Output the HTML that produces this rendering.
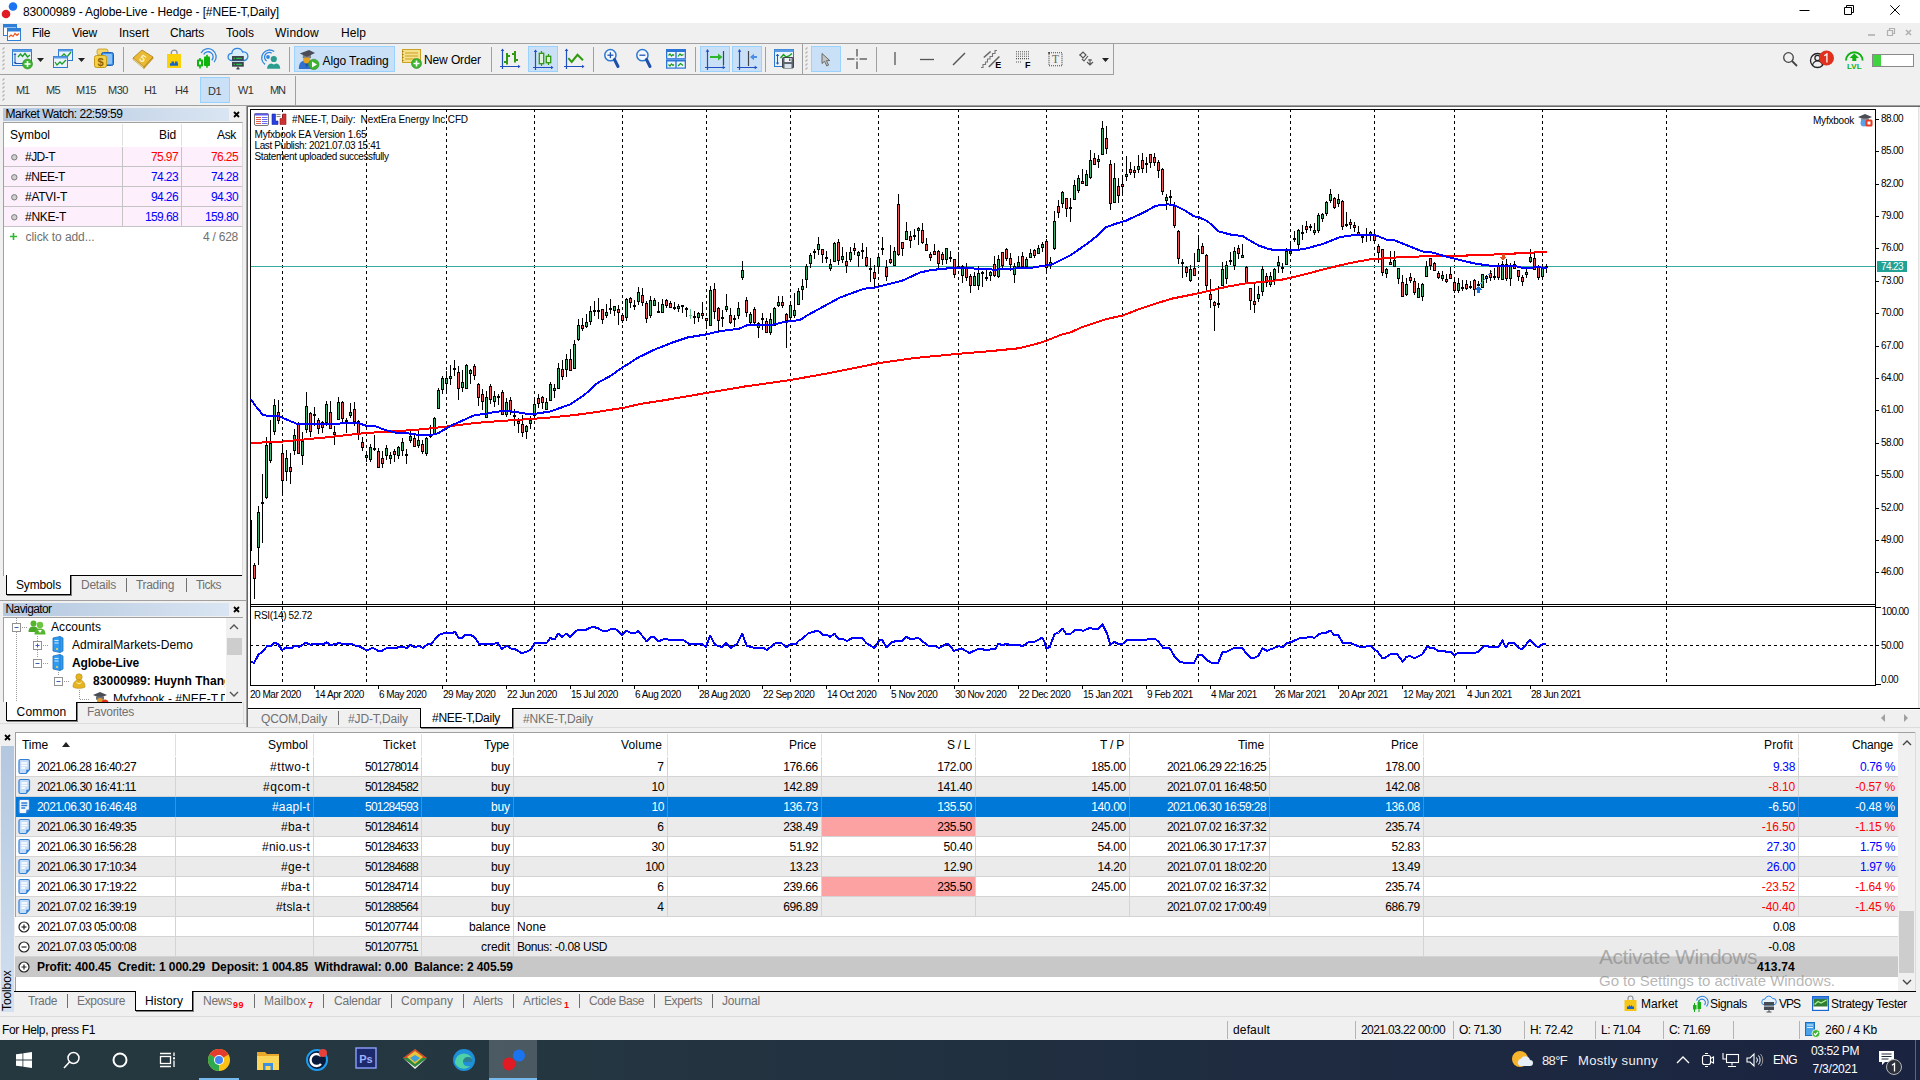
<!DOCTYPE html>
<html><head><meta charset="utf-8"><title>MetaTrader 5</title>
<style>
html,body{margin:0;padding:0;}
body{width:1920px;height:1080px;overflow:hidden;background:#f0f0f0;font-family:"Liberation Sans",sans-serif;position:relative;}
#r{position:absolute;left:0;top:0;width:1920px;height:1080px;overflow:hidden;}
#r div{position:absolute;box-sizing:border-box;}
#r svg{position:absolute;overflow:visible;}
.t{white-space:pre;}
</style></head><body><div id="r">
<div style="left:0px;top:0px;width:1920px;height:23px;background:#ffffff;"></div>
<svg style="left:0;top:0" width="24" height="23"><circle cx="6" cy="14" r="4.3" fill="#e01b24"/><circle cx="13" cy="6.5" r="4.3" fill="#1a73f0"/></svg>
<div class="t" style="left:23.00px;top:3.50px;height:16px;line-height:16px;font-size:12px;color:#000;letter-spacing:-0.116px;">83000989 - Aglobe-Live - Hedge - [#NEE-T,Daily]</div>
<svg style="left:1780px;top:0" width="140" height="23" fill="none" stroke="#000" stroke-width="1"><path d="M19.500 10.500h10"/><path d="M64.500 7.500h7v7h-7z M66.500 7.500v-2h7v7h-2"/><path d="M110.300 5.300l9.400 9.400M119.700 5.300l-9.400 9.400" stroke-width="1"/></svg>
<div style="left:0px;top:23px;width:1920px;height:21px;background:#f0f0f0;"></div>
<div style="left:0px;top:43px;width:1920px;height:1px;background:#a0a0a0;"></div>
<svg style="left:3px;top:24px" width="19" height="18"><rect x="0.5" y="0.5" width="13" height="11" fill="#fff" stroke="#2f7fd6"/><rect x="0.5" y="0.5" width="13" height="3" fill="#2f7fd6"/><rect x="4.5" y="4.5" width="13" height="12" fill="#fff" stroke="#2f7fd6"/><rect x="4.5" y="4.5" width="13" height="3" fill="#2f7fd6"/><path d="M6 13l2-2 2 1.5 2-3 2 2 2-2" stroke="#e8541a" fill="none" stroke-width="1.2"/></svg>
<div class="t" style="left:32.00px;top:25.00px;height:16px;line-height:16px;font-size:12px;color:#000;letter-spacing:-0.334px;">File</div>
<div class="t" style="left:72.00px;top:25.00px;height:16px;line-height:16px;font-size:12px;color:#000;letter-spacing:-0.198px;">View</div>
<div class="t" style="left:119.00px;top:25.00px;height:16px;line-height:16px;font-size:12px;color:#000;letter-spacing:-0.002px;">Insert</div>
<div class="t" style="left:170.00px;top:25.00px;height:16px;line-height:16px;font-size:12px;color:#000;letter-spacing:-0.224px;">Charts</div>
<div class="t" style="left:226.00px;top:25.00px;height:16px;line-height:16px;font-size:12px;color:#000;letter-spacing:-0.003px;">Tools</div>
<div class="t" style="left:275.00px;top:25.00px;height:16px;line-height:16px;font-size:12px;color:#000;letter-spacing:0.220px;">Window</div>
<div class="t" style="left:341.00px;top:25.00px;height:16px;line-height:16px;font-size:12px;color:#000;letter-spacing:0.080px;">Help</div>
<svg style="left:1860px;top:24px" width="60" height="18" fill="none" stroke="#b0b0b0" stroke-width="1.6"><path d="M8 11h7"/><path d="M27.5 6.5h5v5h-5z M29.5 6.5v-2h5v5h-2" stroke-width="1.2"/><path d="M46 6l5 5M51 6l-5 5"/></svg>
<div style="left:0px;top:74px;width:1114px;height:1px;background:#a0a0a0;"></div>
<div style="left:0px;top:105px;width:1920px;height:1px;background:#a0a0a0;"></div>
<svg style="left:2px;top:47px" width="4" height="25" viewBox="0 0 4 25" ><path d="M0.500 2.5l2-2" stroke="#b4b4b4" stroke-width="1.200"/><path d="M0.500 6.5l2-2" stroke="#b4b4b4" stroke-width="1.200"/><path d="M0.500 10.5l2-2" stroke="#b4b4b4" stroke-width="1.200"/><path d="M0.500 14.5l2-2" stroke="#b4b4b4" stroke-width="1.200"/><path d="M0.500 18.5l2-2" stroke="#b4b4b4" stroke-width="1.200"/><path d="M0.500 22.5l2-2" stroke="#b4b4b4" stroke-width="1.200"/></svg>
<svg style="left:2px;top:78px" width="4" height="25" viewBox="0 0 4 25" ><path d="M0.500 2.5l2-2" stroke="#b4b4b4" stroke-width="1.200"/><path d="M0.500 6.5l2-2" stroke="#b4b4b4" stroke-width="1.200"/><path d="M0.500 10.5l2-2" stroke="#b4b4b4" stroke-width="1.200"/><path d="M0.500 14.5l2-2" stroke="#b4b4b4" stroke-width="1.200"/><path d="M0.500 18.5l2-2" stroke="#b4b4b4" stroke-width="1.200"/><path d="M0.500 22.5l2-2" stroke="#b4b4b4" stroke-width="1.200"/></svg>
<svg style="left:805px;top:47px" width="4" height="25" viewBox="0 0 4 25" ><path d="M0.500 2.5l2-2" stroke="#b4b4b4" stroke-width="1.200"/><path d="M0.500 6.5l2-2" stroke="#b4b4b4" stroke-width="1.200"/><path d="M0.500 10.5l2-2" stroke="#b4b4b4" stroke-width="1.200"/><path d="M0.500 14.5l2-2" stroke="#b4b4b4" stroke-width="1.200"/><path d="M0.500 18.5l2-2" stroke="#b4b4b4" stroke-width="1.200"/><path d="M0.500 22.5l2-2" stroke="#b4b4b4" stroke-width="1.200"/></svg>
<div style="left:123px;top:47px;width:1px;height:25px;background:#a0a0a0;"></div>
<div style="left:289px;top:47px;width:1px;height:25px;background:#a0a0a0;"></div>
<div style="left:491px;top:47px;width:1px;height:25px;background:#a0a0a0;"></div>
<div style="left:593px;top:47px;width:1px;height:25px;background:#a0a0a0;"></div>
<div style="left:695px;top:47px;width:1px;height:25px;background:#a0a0a0;"></div>
<div style="left:765px;top:47px;width:1px;height:25px;background:#a0a0a0;"></div>
<div style="left:802px;top:44px;width:1px;height:30px;background:#a0a0a0;"></div>
<div style="left:876px;top:47px;width:1px;height:25px;background:#a0a0a0;"></div>
<div style="left:1113px;top:44px;width:1px;height:31px;background:#a0a0a0;"></div>
<div style="left:295px;top:76px;width:1px;height:29px;background:#a0a0a0;"></div>
<div style="left:294px;top:46px;width:101px;height:26px;background:#c9e0f7;border:1px solid #99d1ff"></div>
<div style="left:528px;top:46px;width:30px;height:26px;background:#c9e0f7;border:1px solid #99d1ff"></div>
<div style="left:700px;top:46px;width:30px;height:26px;background:#c9e0f7;border:1px solid #99d1ff"></div>
<div style="left:732px;top:46px;width:30px;height:26px;background:#c9e0f7;border:1px solid #99d1ff"></div>
<div style="left:811px;top:46px;width:30px;height:26px;background:#c9e0f7;border:1px solid #99d1ff"></div>
<div style="left:200px;top:77px;width:30px;height:26px;background:#c9e0f7;border:1px solid #99d1ff"></div>
<div class="t" style="left:322.50px;top:52.50px;height:16px;line-height:16px;font-size:12px;color:#000;letter-spacing:-0.115px;">Algo Trading</div>
<div class="t" style="left:424.00px;top:51.50px;height:16px;line-height:16px;font-size:12px;color:#000;letter-spacing:-0.113px;">New Order</div>
<div class="t" style="left:16.00px;top:82.00px;height:16px;line-height:16px;font-size:11px;color:#333;letter-spacing:-1.141px;">M1</div>
<div class="t" style="left:46.00px;top:82.00px;height:16px;line-height:16px;font-size:11px;color:#333;letter-spacing:-0.641px;">M5</div>
<div class="t" style="left:76.00px;top:82.00px;height:16px;line-height:16px;font-size:11px;color:#333;letter-spacing:-0.466px;">M15</div>
<div class="t" style="left:108.00px;top:82.00px;height:16px;line-height:16px;font-size:11px;color:#333;letter-spacing:-0.466px;">M30</div>
<div class="t" style="left:144.00px;top:82.00px;height:16px;line-height:16px;font-size:11px;color:#333;letter-spacing:-1.030px;">H1</div>
<div class="t" style="left:175.00px;top:82.00px;height:16px;line-height:16px;font-size:11px;color:#333;letter-spacing:-0.530px;">H4</div>
<div class="t" style="left:208.00px;top:82.50px;height:16px;line-height:16px;font-size:11px;color:#333;letter-spacing:-0.530px;">D1</div>
<div class="t" style="left:238.00px;top:82.00px;height:16px;line-height:16px;font-size:11px;color:#333;letter-spacing:-0.750px;">W1</div>
<div class="t" style="left:270.00px;top:82.00px;height:16px;line-height:16px;font-size:11px;color:#333;letter-spacing:-1.054px;">MN</div>
<svg style="left:12px;top:48px" width="22" height="22" viewBox="0 0 22 22" ><rect x="0.5" y="1.5" width="19" height="16" fill="#e8f1fb" stroke="#2f78d0"/><rect x="0.5" y="1.5" width="19" height="2.5" fill="#5a9be6"/><path d="M3 6v9M2 7l1-1.5 1 1.5M2 14l1 1.5 1-1.5M3 15.5h15" stroke="#2456b5" fill="none" stroke-width="1"/><path d="M6 9l2.5-3 2 2.5 2.5-3 2.5 3.5 2.5-2" stroke="#1e9e28" fill="none" stroke-width="1.4"/><circle cx="15.5" cy="16" r="5" fill="#3cb531" stroke="#2a8a22" stroke-width=".6"/><path d="M15.5 13v6M12.5 16h6" stroke="#fff" stroke-width="1.6"/></svg>
<svg style="left:37px;top:58px" width="8" height="5" viewBox="0 0 8 5" ><path d="M0 0h7l-3.5 4z" fill="#222"/></svg>
<svg style="left:53px;top:48px" width="22" height="22" viewBox="0 0 22 22" ><rect x="5.5" y="1.5" width="14" height="11" fill="#eaf2fb" stroke="#2f78d0"/><rect x="5.5" y="1.5" width="14" height="2" fill="#5a9be6"/><path d="M8 9l3-3 3 3 4-5" stroke="#1e9e28" fill="none" stroke-width="1.3"/><rect x="0.5" y="8.5" width="14" height="11" fill="#eaf2fb" stroke="#2f78d0"/><rect x="0.5" y="8.5" width="14" height="2" fill="#5a9be6"/><path d="M2 14l2 3 3-3 2 2 4-4" stroke="#1e9e28" fill="none" stroke-width="1.3"/></svg>
<svg style="left:78px;top:58px" width="8" height="5" viewBox="0 0 8 5" ><path d="M0 0h7l-3.5 4z" fill="#222"/></svg>
<svg style="left:94px;top:48px" width="22" height="22" viewBox="0 0 22 22" ><rect x="3" y="1" width="11" height="6" rx="2" fill="#f3d46a" stroke="#c49a18" stroke-width=".8"/><rect x="7.5" y="4.5" width="12" height="13" rx="2" fill="#3d8fe8" stroke="#1d5fb8"/><rect x="9" y="6" width="9" height="10" rx="1" fill="#8cc3f7"/><rect x="0.5" y="7.5" width="12" height="12" rx="2" fill="#f5cf45" stroke="#c49a18"/><text x="6.5" y="17.5" font-size="11" text-anchor="middle" fill="#8a6508" font-family="Liberation Sans" font-weight="bold">$</text></svg>
<svg style="left:132px;top:48px" width="22" height="22" viewBox="0 0 22 22" ><path d="M1 10l9-8 11 7-9 10z" fill="#e9b934" stroke="#a87c12" stroke-width=".8"/><path d="M1 10l11 9v1.5l-11-9z" fill="#fbe9a6" stroke="#a87c12" stroke-width=".5"/><path d="M12 19l9-10v1.5l-9 10z" fill="#d9a520" stroke="#a87c12" stroke-width=".5"/><text x="11" y="14" font-size="10" font-weight="bold" text-anchor="middle" fill="#fff3c0" transform="rotate(35 11 10)" font-family="Liberation Sans">5</text></svg>
<svg style="left:166px;top:48px" width="16" height="22" viewBox="0 0 16 22" ><path d="M5.300 6.500V5a2.900 2.900 0 0 1 5.800 0v1.500" fill="none" stroke="#8a8f98" stroke-width="1.300"/><rect x="1" y="6" width="14" height="14" fill="#fbd10a"/><path d="M4 17.800v-2.500h1.500v-1.800h2.500v1.800h1v-1.800h2.500v1.800h0.500v2.500z" fill="#1565c0"/></svg>
<svg style="left:196px;top:48px" width="22" height="22" viewBox="0 0 22 22" ><path d="M5.100 5a8 8 0 1 1 13 9.100" fill="none" stroke="#2f86e0" stroke-width="1.300"/><path d="M7.700 6.500a5 5 0 1 1 8.100 5.700" fill="none" stroke="#2f86e0" stroke-width="1.300"/><path d="M4 10v10.600M11 6.800v13" stroke="#0cb40c" stroke-width="1.600"/><rect x="1" y="11.400" width="6" height="7.100" rx="0.800" fill="#0cb40c"/><rect x="3" y="13.500" width="2" height="3" fill="#fff"/><rect x="8" y="8.500" width="6" height="9.500" rx="0.800" fill="#0cb40c"/></svg>
<svg style="left:227px;top:48px" width="22" height="22" viewBox="0 0 22 22" ><path d="M4.500 12.500a3.600 3.600 0 0 1 0.300-7.200a5.600 5.600 0 0 1 10.800-1.300a4.300 4.300 0 0 1 1.900 8.500z" fill="#d9eefb" stroke="#2f86e0" stroke-width="1.300"/><rect x="5" y="8" width="11.800" height="4.700" fill="#3f454f"/><rect x="5" y="14" width="11.800" height="4.700" fill="#3f454f"/><path d="M6.700 10.400h1.200M9.300 10.400h5.500M6.700 16.400h1.200M9.300 16.400h5.500" stroke="#27c24a" stroke-width="1.200"/><path d="M11 18.700v2M9.500 20.700h3" stroke="#3f454f" stroke-width="1.400"/></svg>
<svg style="left:259px;top:48px" width="22" height="22" viewBox="0 0 22 22" ><circle cx="9" cy="9" r="1.900" fill="#2f86e0"/><path d="M12.700 5.200a4.400 4.400 0 1 0 -5 7.800" fill="none" stroke="#2f86e0" stroke-width="1.300"/><path d="M15.200 3.500a7.600 7.600 0 1 0 -9.200 12.900" fill="none" stroke="#2f86e0" stroke-width="1.300"/><circle cx="14.800" cy="11" r="3.100" fill="#2a9d8f"/><path d="M8 20.800c0.300-3.500 1.800-4.800 4.300-5.300l2.500 1 2.500-1c2.500 0.500 3.700 1.800 4 5.300z" fill="#2a9d8f"/></svg>
<svg style="left:298px;top:48px" width="22" height="22" viewBox="0 0 22 22" ><path d="M0.800 21c0-6 2.700-8.700 7.600-8.700s6.500 2.700 7 8.700z" fill="#2f6fd0"/><path d="M6 13l3 7 1.500-7z" fill="#1d4fa8"/><circle cx="8.700" cy="11.800" r="3.600" fill="#e3a21f"/><path d="M4.800 7v3.300c2.200-1.200 6-1.200 8.200 0v-3.300z" fill="#7a7e87"/><path d="M1.800 5.500l9.200-3.500 6 3-8 3.700z" fill="#4a4d55"/><circle cx="15.800" cy="16.400" r="5.200" fill="#3db32f" stroke="#2a8a22" stroke-width=".6"/><path d="M14 13.400v6l5-3z" fill="#fff"/></svg>
<svg style="left:401px;top:48px" width="22" height="22" viewBox="0 0 22 22" ><rect x="1.500" y="1.500" width="18" height="13" fill="#f7e08a" stroke="#c9a227"/><path d="M4 5h13M4 8h13M4 11h10" stroke="#c9a227" stroke-width="1"/><path d="M1 3.500h1.500M1 6.500h1.500M1 9.500h1.500M1 12.500h1.500" stroke="#9a7a10"/><circle cx="15.500" cy="15.500" r="5" fill="#3cb531" stroke="#2a8a22" stroke-width=".6"/><path d="M15.500 12.500v6M12.500 15.500h6" stroke="#fff" stroke-width="1.600"/></svg>
<svg style="left:500px;top:48px" width="22" height="22" viewBox="0 0 22 22" ><path d="M2.500 2v19M0 18.500h19" stroke="#1f4fc0" fill="none" stroke-width="1.200"/><path d="M2.500 0.500l1.800 2.500h-3.600zM20.500 18.500l-2.500 1.800v-3.600z" fill="#1f4fc0"/><path d="M7 5v11.500M7 14h-3M7 8h3M15 3v11.500M15 6h-3M15 12h3" stroke="#2f9a10" stroke-width="2" fill="none"/></svg>
<svg style="left:533px;top:49px" width="22" height="22" viewBox="0 0 22 22" ><path d="M2.500 2v19M0 18.500h19" stroke="#1f4fc0" fill="none" stroke-width="1.200"/><path d="M2.500 0.500l1.800 2.500h-3.600zM20.500 18.500l-2.500 1.800v-3.600z" fill="#1f4fc0"/><path d="M8.500 2v15M15.500 5v11" stroke="#2f9a10" stroke-width="1.200"/><rect x="6.300" y="4.300" width="4.400" height="10.400" fill="#e2f3dc" stroke="#2f9a10" stroke-width="1.300"/><rect x="13.300" y="7.300" width="4.400" height="6.400" fill="#e2f3dc" stroke="#2f9a10" stroke-width="1.300"/></svg>
<svg style="left:564px;top:48px" width="22" height="22" viewBox="0 0 22 22" ><path d="M2.500 2v19M0 18.500h19" stroke="#1f4fc0" fill="none" stroke-width="1.200"/><path d="M2.500 0.500l1.800 2.500h-3.600zM20.500 18.500l-2.500 1.800v-3.600z" fill="#1f4fc0"/><path d="M4.300 10.200l3.400 3.800 5.800-7.200 5.500 5.500" stroke="#2f9a10" stroke-width="2" fill="none"/></svg>
<svg style="left:603px;top:48px" width="20" height="22" viewBox="0 0 20 22" ><circle cx="7.400" cy="7.200" r="5.600" fill="#f2f8fe" stroke="#2f78d0" stroke-width="1.500"/><path d="M11.500 11.500l3.500 7" stroke="#1f4fa8" stroke-width="3" stroke-linecap="round"/><path d="M4.400 7.200h6" stroke="#2456b5" stroke-width="1.300"/><path d="M7.400 4.200v6" stroke="#2456b5" stroke-width="1.300"/></svg>
<svg style="left:635px;top:48px" width="20" height="22" viewBox="0 0 20 22" ><circle cx="7.400" cy="7.200" r="5.600" fill="#f2f8fe" stroke="#2f78d0" stroke-width="1.500"/><path d="M11.500 11.500l3.500 7" stroke="#1f4fa8" stroke-width="3" stroke-linecap="round"/><path d="M4.400 7.200h6" stroke="#2456b5" stroke-width="1.300"/></svg>
<svg style="left:666px;top:49px" width="21" height="20" viewBox="0 0 21 20" ><rect x="0" y="0" width="20" height="19.700" fill="#2b74d8"/><g fill="#eef5fd"><rect x="1.300" y="3" width="8" height="6"/><rect x="10.700" y="3" width="8" height="6"/><rect x="1.300" y="12.500" width="8" height="6"/><rect x="10.700" y="12.500" width="8" height="6"/></g><rect x="0" y="9.600" width="20" height="1" fill="#7fb0ee"/><path d="M2.500 6.500l1.500-1.500 1.500 2 1.500-1.500 1 1M12 7.500l2-2.500 1.500 1.500 2-1M2.500 15.500l1.500 1.500 1.500-2 1.500 1.500 1-1M12 17l2.500-2.500 2.500 2" stroke="#1a9a1a" fill="none" stroke-width="1.200"/></svg>
<svg style="left:705px;top:48px" width="22" height="23" viewBox="0 0 22 23" ><path d="M2.500 3v19M0 19.500h19" stroke="#1f4fc0" fill="none" stroke-width="1.200"/><path d="M2.500 1l1.800 2.800h-3.600zM20.500 19.500l-2.800 1.800v-3.600z" fill="#1f4fc0"/><path d="M18.500 3v14.500" stroke="#444" stroke-width="1.200"/><path d="M5 8h8v-2.500l4.500 3.500-4.500 3.500v-2.500h-8z" fill="#2fb52f"/></svg>
<svg style="left:737px;top:48px" width="22" height="23" viewBox="0 0 22 23" ><path d="M2.500 3v19M0 19.500h19" stroke="#1f4fc0" fill="none" stroke-width="1.200"/><path d="M2.500 1l1.800 2.800h-3.600zM20.500 19.500l-2.800 1.800v-3.600z" fill="#1f4fc0"/><path d="M11.500 3v15" stroke="#444" stroke-width="1.200"/><path d="M20 8h-3v-2.300l-4 3.300 4 3.300v-2.300h3z" fill="#4a8ee8"/></svg>
<svg style="left:774px;top:49px" width="22" height="20" viewBox="0 0 22 20" ><rect x="0.500" y="0.500" width="19" height="17" fill="#eaf2fb" stroke="#2f78d0"/><rect x="0.500" y="0.500" width="19" height="2.500" fill="#5a9be6"/><path d="M3.500 5.500v9.500M2.300 7l1.200-1.800 1.200 1.800M2.300 13.500l1.200 1.800 1.200-1.800" stroke="#2456b5" fill="none"/><path d="M6.500 9l3-3.500 2.500 2.500 3-1 3-2.500" stroke="#16a016" fill="none" stroke-width="1.400"/><rect x="8.500" y="8.500" width="11" height="10.500" rx="1" fill="#5f6670" stroke="#3f444c"/><rect x="10.500" y="9" width="7" height="4" fill="#eef4fa"/><rect x="15" y="9.500" width="1.500" height="2.500" fill="#5f6670"/><rect x="10.500" y="15" width="7" height="4" fill="#d8e2ec"/></svg>
<svg style="left:820px;top:52px" width="14" height="16" viewBox="0 0 14 16" ><path d="M2 1.500v10l2.600-2.200 2.200 4.700 1.800-0.900-2.200-4.500h3.400z" fill="#c4c4c4" stroke="#6a6a6a" stroke-width="1"/></svg>
<svg style="left:846px;top:48px" width="22" height="22" viewBox="0 0 22 22" ><path d="M11 1v7.500M11 13.500v7.500M1 11h7.500M13.500 11h7.500" stroke="#666" stroke-width="1.500"/><rect x="10.300" y="10.300" width="1.400" height="1.400" fill="#666"/></svg>
<svg style="left:893px;top:52px" width="4" height="14" viewBox="0 0 4 14" ><path d="M2 0v13" stroke="#555" stroke-width="1.300"/></svg>
<svg style="left:920px;top:58px" width="15" height="3" viewBox="0 0 15 3" ><path d="M0 1.500h14" stroke="#555" stroke-width="1.300"/></svg>
<svg style="left:952px;top:52px" width="15" height="15" viewBox="0 0 15 15" ><path d="M1 13L13 1" stroke="#555" stroke-width="1.400"/></svg>
<svg style="left:980px;top:49px" width="24" height="22" viewBox="0 0 24 22" ><path d="M1 18.500h2v-3h2.500v-2.500h2v-3h2.500v-2.500h2.500v-3h2.500v-3h2" stroke="#777" fill="none" stroke-width="1.100"/><path d="M3.800 8.500L10.600 2.500M8.800 18L19.400 7.500" stroke="#666" stroke-width="1.600"/><text x="15.300" y="18.800" font-size="9" font-weight="bold" font-family="Liberation Sans" fill="#000">E</text></svg>
<svg style="left:1015px;top:50px" width="20" height="20" viewBox="0 0 20 20" ><path d="M1 1.700h13M1 4h13M1 6.300h13M1 8.600h13M1 12h6" stroke="#555" stroke-width="1.100" stroke-dasharray="1 1"/><text x="10" y="17.800" font-size="9" font-weight="bold" font-family="Liberation Sans" fill="#000">F</text></svg>
<svg style="left:1047px;top:50px" width="18" height="18" viewBox="0 0 18 18" ><rect x="2" y="2.700" width="13" height="13" fill="none" stroke="#444" stroke-width="1.100" stroke-dasharray="1 1"/><rect x="1.200" y="2" width="1.800" height="1.800" fill="#444"/><text x="8.500" y="13.300" font-size="11.500" text-anchor="middle" font-family="Liberation Serif" fill="#666">T</text></svg>
<svg style="left:1078px;top:50px" width="20" height="18" viewBox="0 0 20 18" ><path d="M2 5l3-3 3 3-3 3zM1 5h2M9 12l3 3 3-3M12 9v6M10 10h4" stroke="#555" fill="none" stroke-width="1.100"/><path d="M4 9l2 2 4-5" stroke="#555" fill="none" stroke-width="1.100"/></svg>
<svg style="left:1102px;top:58px" width="8" height="5" viewBox="0 0 8 5" ><path d="M0 0h7l-3.5 4z" fill="#222"/></svg>
<svg style="left:1782px;top:51px" width="18" height="18" viewBox="0 0 18 18" ><circle cx="6.500" cy="6.500" r="4.800" fill="none" stroke="#444" stroke-width="1.300"/><path d="M10 10l5 5" stroke="#444" stroke-width="1.800"/></svg>
<svg style="left:1809px;top:50px" width="30" height="20" viewBox="0 0 30 20" ><circle cx="8.500" cy="10.500" r="7" fill="none" stroke="#222" stroke-width="1.300"/><circle cx="8.500" cy="8" r="2.600" fill="none" stroke="#222" stroke-width="1.200"/><path d="M3.500 15c1-3 3-4 5-4s4 1 5 4" fill="none" stroke="#222" stroke-width="1.200"/><circle cx="17.500" cy="8" r="7.500" fill="#e0301e"/><path d="M15.300 5.800l2.600-1.800v8.500" fill="none" stroke="#fff" stroke-width="1.300"/></svg>
<svg style="left:1843px;top:49px" width="22" height="22" viewBox="0 0 22 22" ><path d="M3 11.500a8.300 8.300 0 0 1 16.600 0" fill="none" stroke="#12b012" stroke-width="2"/><path d="M11.300 4.500l4.700 4.500h-2.700v3h-4v-3h-2.700z" fill="#12b012"/><text x="11.300" y="20" font-size="8" font-weight="bold" text-anchor="middle" fill="#12b012" font-family="Liberation Sans">LVL</text></svg>
<div style="left:1872px;top:54px;width:42px;height:13px;background:#fff;border:1px solid #8a8a8a"></div>
<div style="left:1873px;top:55px;width:8px;height:11px;background:#3fd33f;"></div>
<div style="left:3px;top:108px;width:226px;height:13px;background:linear-gradient(to right,#b3c7df,#d9e5f2);"></div>
<div class="t" style="left:5.50px;top:106.00px;height:16px;line-height:16px;font-size:12px;color:#000;letter-spacing:-0.452px;">Market Watch: 22:59:59</div>
<svg style="left:233.0px;top:111.0px" width="7.0" height="7.0" viewBox="0 0 7.0 7.0" ><path d="M1 1l5.0 5.0M6.0 1l-5.0 5.0" stroke="#000" stroke-width="1.8"/></svg>
<div style="left:3px;top:122px;width:240px;height:454px;background:#fff;border-top:1px solid #a0a0a0;border-left:1px solid #a0a0a0;border-right:1px solid #dcdcdc"></div>
<div class="t" style="left:10.00px;top:127.00px;height:16px;line-height:16px;font-size:12px;color:#000;letter-spacing:-0.002px;">Symbol</div>
<div class="t" style="left:159.00px;top:127.00px;height:16px;line-height:16px;font-size:12px;color:#000;letter-spacing:-0.115px;">Bid</div>
<div class="t" style="left:217.00px;top:127.00px;height:16px;line-height:16px;font-size:12px;color:#000;letter-spacing:-0.335px;">Ask</div>
<div style="left:122px;top:124px;width:1px;height:22px;background:#e0e0e0;"></div>
<div style="left:181px;top:124px;width:1px;height:22px;background:#e0e0e0;"></div>
<div style="left:4px;top:147px;width:238px;height:19px;background:#fdf0fc;"></div>
<div style="left:4px;top:166px;width:238px;height:1px;background:#c4c4c4;"></div>
<div style="left:122px;top:147px;width:1px;height:20px;background:#c4c4c4;"></div>
<div style="left:181px;top:147px;width:1px;height:20px;background:#c4c4c4;"></div>
<svg style="left:10px;top:153px" width="9" height="9" viewBox="0 0 9 9" ><circle cx="4.300" cy="4.300" r="2.700" fill="#d0d0d0" stroke="#7a7a7a" stroke-width="1"/></svg>
<div class="t" style="left:25.00px;top:148.50px;height:16px;line-height:16px;font-size:12px;color:#000;letter-spacing:-0.533px;">#JD-T</div>
<div class="t" style="left:151.00px;top:148.50px;height:16px;line-height:16px;font-size:12px;color:#ff0000;letter-spacing:-0.606px;">75.97</div>
<div class="t" style="left:211.00px;top:148.50px;height:16px;line-height:16px;font-size:12px;color:#ff0000;letter-spacing:-0.606px;">76.25</div>
<div style="left:4px;top:167px;width:238px;height:19px;background:#fdf0fc;"></div>
<div style="left:4px;top:186px;width:238px;height:1px;background:#c4c4c4;"></div>
<div style="left:122px;top:167px;width:1px;height:20px;background:#c4c4c4;"></div>
<div style="left:181px;top:167px;width:1px;height:20px;background:#c4c4c4;"></div>
<svg style="left:10px;top:173px" width="9" height="9" viewBox="0 0 9 9" ><circle cx="4.300" cy="4.300" r="2.700" fill="#d0d0d0" stroke="#7a7a7a" stroke-width="1"/></svg>
<div class="t" style="left:25.00px;top:168.50px;height:16px;line-height:16px;font-size:12px;color:#000;letter-spacing:-0.446px;">#NEE-T</div>
<div class="t" style="left:151.00px;top:168.50px;height:16px;line-height:16px;font-size:12px;color:#0000ff;letter-spacing:-0.606px;">74.23</div>
<div class="t" style="left:211.00px;top:168.50px;height:16px;line-height:16px;font-size:12px;color:#0000ff;letter-spacing:-0.606px;">74.28</div>
<div style="left:4px;top:187px;width:238px;height:19px;background:#fdf0fc;"></div>
<div style="left:4px;top:206px;width:238px;height:1px;background:#c4c4c4;"></div>
<div style="left:122px;top:187px;width:1px;height:20px;background:#c4c4c4;"></div>
<div style="left:181px;top:187px;width:1px;height:20px;background:#c4c4c4;"></div>
<svg style="left:10px;top:193px" width="9" height="9" viewBox="0 0 9 9" ><circle cx="4.300" cy="4.300" r="2.700" fill="#d0d0d0" stroke="#7a7a7a" stroke-width="1"/></svg>
<div class="t" style="left:25.00px;top:188.50px;height:16px;line-height:16px;font-size:12px;color:#000;letter-spacing:-0.254px;">#ATVI-T</div>
<div class="t" style="left:151.00px;top:188.50px;height:16px;line-height:16px;font-size:12px;color:#0000ff;letter-spacing:-0.606px;">94.26</div>
<div class="t" style="left:211.00px;top:188.50px;height:16px;line-height:16px;font-size:12px;color:#0000ff;letter-spacing:-0.606px;">94.30</div>
<div style="left:4px;top:207px;width:238px;height:19px;background:#fdf0fc;"></div>
<div style="left:4px;top:226px;width:238px;height:1px;background:#c4c4c4;"></div>
<div style="left:122px;top:207px;width:1px;height:20px;background:#c4c4c4;"></div>
<div style="left:181px;top:207px;width:1px;height:20px;background:#c4c4c4;"></div>
<svg style="left:10px;top:213px" width="9" height="9" viewBox="0 0 9 9" ><circle cx="4.300" cy="4.300" r="2.700" fill="#d0d0d0" stroke="#7a7a7a" stroke-width="1"/></svg>
<div class="t" style="left:25.00px;top:208.50px;height:16px;line-height:16px;font-size:12px;color:#000;letter-spacing:-0.279px;">#NKE-T</div>
<div class="t" style="left:145.00px;top:208.50px;height:16px;line-height:16px;font-size:12px;color:#0000ff;letter-spacing:-0.617px;">159.68</div>
<div class="t" style="left:205.00px;top:208.50px;height:16px;line-height:16px;font-size:12px;color:#0000ff;letter-spacing:-0.617px;">159.80</div>
<svg style="left:9px;top:232px" width="10" height="10" viewBox="0 0 10 10" ><path d="M4.500 1v7M1 4.500h7" stroke="#2db82d" stroke-width="1.600"/></svg>
<div class="t" style="left:25.50px;top:229.00px;height:16px;line-height:16px;font-size:12px;color:#707070;letter-spacing:-0.069px;">click to add...</div>
<div class="t" style="left:203.00px;top:229.00px;height:16px;line-height:16px;font-size:12px;color:#707070;letter-spacing:-0.242px;">4 / 628</div>
<div style="left:70px;top:575px;width:172px;height:1px;background:#000;"></div>
<div style="left:6px;top:575px;width:65px;height:20px;background:#fff;border:1px solid #000;border-top:none;box-shadow:1px 1px 0 #808080"></div>
<div class="t" style="left:16.00px;top:577.00px;height:16px;line-height:16px;font-size:12px;color:#000;letter-spacing:-0.145px;">Symbols</div>
<div class="t" style="left:81.00px;top:577.00px;height:16px;line-height:16px;font-size:12px;color:#707070;letter-spacing:-0.240px;">Details</div>
<div style="left:126px;top:578px;width:1px;height:14px;background:#707070;"></div>
<div class="t" style="left:136.00px;top:577.00px;height:16px;line-height:16px;font-size:12px;color:#707070;letter-spacing:-0.320px;">Trading</div>
<div style="left:186px;top:578px;width:1px;height:14px;background:#707070;"></div>
<div class="t" style="left:196.00px;top:577.00px;height:16px;line-height:16px;font-size:12px;color:#707070;letter-spacing:-0.510px;">Ticks</div>
<div style="left:0px;top:600px;width:246px;height:1px;background:#a0a0a0;"></div>
<div style="left:3px;top:603px;width:226px;height:13px;background:linear-gradient(to right,#b3c7df,#d9e5f2);"></div>
<div class="t" style="left:5.50px;top:601.00px;height:16px;line-height:16px;font-size:12px;color:#000;letter-spacing:-0.595px;">Navigator</div>
<svg style="left:233.0px;top:606.0px" width="7.0" height="7.0" viewBox="0 0 7.0 7.0" ><path d="M1 1l5.0 5.0M6.0 1l-5.0 5.0" stroke="#000" stroke-width="1.8"/></svg>
<div style="left:3px;top:617px;width:240px;height:85px;background:#fff;border-top:1px solid #a0a0a0;border-left:1px solid #a0a0a0;overflow:hidden"></div>
<div style="left:16px;top:618px;width:1px;height:84px;background:repeating-linear-gradient(to bottom,#9a9a9a 0 1px,transparent 1px 2px)"></div>
<div style="left:37px;top:636px;width:1px;height:22px;background:repeating-linear-gradient(to bottom,#9a9a9a 0 1px,transparent 1px 2px)"></div>
<div style="left:58px;top:672px;width:1px;height:4px;background:repeating-linear-gradient(to bottom,#9a9a9a 0 1px,transparent 1px 2px)"></div>
<div style="left:79px;top:690px;width:1px;height:10px;background:repeating-linear-gradient(to bottom,#9a9a9a 0 1px,transparent 1px 2px)"></div>
<svg style="left:12px;top:623px" width="9" height="9" viewBox="0 0 9 9" ><rect x="0.500" y="0.500" width="8" height="8" fill="#fff" stroke="#919191"/><path d="M2.500 4.500h4" stroke="#3a5fb0" stroke-width="1"/></svg>
<div style="left:22px;top:627px;width:5px;height:1px;background:repeating-linear-gradient(to right,#9a9a9a 0 1px,transparent 1px 2px)"></div>
<svg style="left:33px;top:641px" width="9" height="9" viewBox="0 0 9 9" ><rect x="0.500" y="0.500" width="8" height="8" fill="#fff" stroke="#919191"/><path d="M2.500 4.500h4" stroke="#3a5fb0" stroke-width="1"/><path d="M4.500 2.500v4" stroke="#3a5fb0" stroke-width="1"/></svg>
<div style="left:43px;top:645px;width:5px;height:1px;background:repeating-linear-gradient(to right,#9a9a9a 0 1px,transparent 1px 2px)"></div>
<svg style="left:33px;top:659px" width="9" height="9" viewBox="0 0 9 9" ><rect x="0.500" y="0.500" width="8" height="8" fill="#fff" stroke="#919191"/><path d="M2.500 4.500h4" stroke="#3a5fb0" stroke-width="1"/></svg>
<div style="left:43px;top:663px;width:5px;height:1px;background:repeating-linear-gradient(to right,#9a9a9a 0 1px,transparent 1px 2px)"></div>
<svg style="left:54px;top:677px" width="9" height="9" viewBox="0 0 9 9" ><rect x="0.500" y="0.500" width="8" height="8" fill="#fff" stroke="#919191"/><path d="M2.500 4.500h4" stroke="#3a5fb0" stroke-width="1"/></svg>
<div style="left:64px;top:681px;width:5px;height:1px;background:repeating-linear-gradient(to right,#9a9a9a 0 1px,transparent 1px 2px)"></div>
<div style="left:80px;top:699px;width:10px;height:1px;background:repeating-linear-gradient(to right,#9a9a9a 0 1px,transparent 1px 2px)"></div>
<svg style="left:28px;top:619px" width="18" height="16" viewBox="0 0 18 16" ><circle cx="5.500" cy="4.500" r="3" fill="#55b52f"/><path d="M0.500 13c0-4 2-5.500 5-5.500s5 1.500 5 5.500z" fill="#4aa829"/><circle cx="12" cy="6" r="3.200" fill="#6cc540"/><path d="M6.500 15.500c0-4.500 2.500-6 5.500-6s5.500 1.500 5.500 6z" fill="#55b52f"/><path d="M10 11l2 3 2-3z" fill="#fff"/></svg>
<svg style="left:52px;top:636px" width="12" height="17" viewBox="0 0 12 17" ><path d="M1 2l7-1.500 3 1.500v13l-3 1.500-7-1.500z" fill="#2f9cf0" stroke="#1b6fc0" stroke-width=".8"/><path d="M8 0.500v16" stroke="#1b6fc0" stroke-width=".6"/><path d="M2.500 4.500h4M2.500 7h4" stroke="#d6ecff" stroke-width="1.200"/><circle cx="5" cy="13" r="1" fill="#ffd84a"/></svg>
<svg style="left:52px;top:654px" width="12" height="17" viewBox="0 0 12 17" ><path d="M1 2l7-1.500 3 1.500v13l-3 1.500-7-1.500z" fill="#2f9cf0" stroke="#1b6fc0" stroke-width=".8"/><path d="M8 0.500v16" stroke="#1b6fc0" stroke-width=".6"/><path d="M2.500 4.500h4M2.500 7h4" stroke="#d6ecff" stroke-width="1.200"/><circle cx="5" cy="13" r="1" fill="#ffd84a"/></svg>
<svg style="left:72px;top:673px" width="14" height="16" viewBox="0 0 14 16" ><circle cx="7" cy="4" r="3.200" fill="#e6b422" stroke="#b8860b" stroke-width=".6"/><path d="M1 14c0-5 2.500-7 6-7s6 2 6 7c-2 1.800-10 1.800-12 0z" fill="#e6b422" stroke="#b8860b" stroke-width=".6"/><path d="M4.500 9.500c1.500 1.500 3.500 1.500 5 0" stroke="#fff3b0" fill="none"/></svg>
<div style="left:92px;top:691px;width:20px;height:11px;overflow:hidden">
<svg style="left:0px;top:0px" width="18" height="12" viewBox="0 0 18 12" ><path d="M1 4l7-3 7 3-7 3z" fill="#4a4d55"/><path d="M4 5.500v3c2.500 1.500 5.500 1.500 8 0v-3" fill="#6b6f78"/><circle cx="8" cy="10" r="3" fill="#e0a030"/><circle cx="13" cy="12" r="3.500" fill="#e0301e"/></svg>
</div>
<div class="t" style="left:51.00px;top:619.00px;height:16px;line-height:16px;font-size:12px;color:#000;letter-spacing:0.080px;">Accounts</div>
<div class="t" style="left:72.00px;top:637.00px;height:16px;line-height:16px;font-size:12px;color:#000;letter-spacing:0.087px;">AdmiralMarkets-Demo</div>
<div class="t" style="left:72.00px;top:655.00px;height:16px;line-height:16px;font-size:12px;color:#000;letter-spacing:-0.152px;font-weight:bold;">Aglobe-Live</div>
<div style="left:93px;top:672px;width:132px;height:18px;overflow:hidden">
<div class="t" style="left:0.00px;top:1.00px;height:16px;line-height:16px;font-size:12px;color:#000;letter-spacing:0.053px;font-weight:bold;">83000989: Huynh Thang</div>
</div>
<div style="left:113px;top:690px;width:112px;height:11px;overflow:hidden">
<div class="t" style="left:0.00px;top:1.00px;height:16px;line-height:16px;font-size:12px;color:#000;letter-spacing:0.028px;">Myfxbook - #NEE-T,Daily</div>
</div>
<div style="left:226px;top:618px;width:17px;height:84px;background:#f0f0f0;"></div>
<svg style="left:229px;top:624px" width="10" height="6" viewBox="0 0 10 6" ><path d="M1 5l4-4 4 4" fill="none" stroke="#555" stroke-width="1.400"/></svg>
<svg style="left:229px;top:691px" width="10" height="6" viewBox="0 0 10 6" ><path d="M1 1l4 4 4-4" fill="none" stroke="#555" stroke-width="1.400"/></svg>
<div style="left:227px;top:638px;width:15px;height:17px;background:#cdcdcd;"></div>
<div style="left:76px;top:702px;width:166px;height:1px;background:#000;"></div>
<div style="left:6px;top:702px;width:71px;height:19px;background:#fff;border:1px solid #000;border-top:none;box-shadow:1px 1px 0 #808080"></div>
<div class="t" style="left:16.50px;top:704.00px;height:16px;line-height:16px;font-size:12px;color:#000;letter-spacing:0.220px;">Common</div>
<div class="t" style="left:87.00px;top:704.00px;height:16px;line-height:16px;font-size:12px;color:#707070;letter-spacing:-0.261px;">Favorites</div>
<div style="left:243px;top:702px;width:1px;height:21px;background:#dcdcdc;"></div>
<div style="left:0px;top:723px;width:246px;height:1px;background:#dcdcdc;"></div>
<div style="left:247px;top:106px;width:1673px;height:1px;background:#696969;"></div>
<div style="left:246px;top:106px;width:1px;height:622px;background:#a0a0a0;"></div>
<div style="left:247px;top:106px;width:1px;height:622px;background:#696969;"></div>
<div style="left:248px;top:107px;width:1670px;height:601px;background:#ffffff;"></div>
<div style="left:1918px;top:107px;width:1px;height:601px;background:#e3e3e3;"></div>
<svg style="left:0;top:0" width="1920" height="1080" shape-rendering="crispEdges"><rect x="250" y="109" width="1626" height="1" fill="#000"/><rect x="250" y="109" width="1" height="577" fill="#000"/><rect x="1875" y="109" width="1" height="577" fill="#000"/><rect x="250" y="604" width="1626" height="1" fill="#000"/><rect x="250" y="606" width="1626" height="1" fill="#000"/><rect x="250" y="685" width="1626" height="1" fill="#000"/><rect x="251" y="605" width="1624" height="1" fill="#fff"/><path d="M282.5 109V604M282.5 607V685" stroke="#000" stroke-width="1" stroke-dasharray="3 3" fill="none"/><path d="M366.5 109V604M366.5 607V685" stroke="#000" stroke-width="1" stroke-dasharray="3 3" fill="none"/><path d="M446.5 109V604M446.5 607V685" stroke="#000" stroke-width="1" stroke-dasharray="3 3" fill="none"/><path d="M534.5 109V604M534.5 607V685" stroke="#000" stroke-width="1" stroke-dasharray="3 3" fill="none"/><path d="M622.5 109V604M622.5 607V685" stroke="#000" stroke-width="1" stroke-dasharray="3 3" fill="none"/><path d="M706.5 109V604M706.5 607V685" stroke="#000" stroke-width="1" stroke-dasharray="3 3" fill="none"/><path d="M790.5 109V604M790.5 607V685" stroke="#000" stroke-width="1" stroke-dasharray="3 3" fill="none"/><path d="M878.5 109V604M878.5 607V685" stroke="#000" stroke-width="1" stroke-dasharray="3 3" fill="none"/><path d="M958.5 109V604M958.5 607V685" stroke="#000" stroke-width="1" stroke-dasharray="3 3" fill="none"/><path d="M1046.5 109V604M1046.5 607V685" stroke="#000" stroke-width="1" stroke-dasharray="3 3" fill="none"/><path d="M1122.5 109V604M1122.5 607V685" stroke="#000" stroke-width="1" stroke-dasharray="3 3" fill="none"/><path d="M1198.5 109V604M1198.5 607V685" stroke="#000" stroke-width="1" stroke-dasharray="3 3" fill="none"/><path d="M1290.5 109V604M1290.5 607V685" stroke="#000" stroke-width="1" stroke-dasharray="3 3" fill="none"/><path d="M1374.5 109V604M1374.5 607V685" stroke="#000" stroke-width="1" stroke-dasharray="3 3" fill="none"/><path d="M1454.5 109V604M1454.5 607V685" stroke="#000" stroke-width="1" stroke-dasharray="3 3" fill="none"/><path d="M1542.5 109V604M1542.5 607V685" stroke="#000" stroke-width="1" stroke-dasharray="3 3" fill="none"/><path d="M1666.5 109V604M1666.5 607V685" stroke="#000" stroke-width="1" stroke-dasharray="3 3" fill="none"/><path d="M250 645.5H1875" stroke="#000" stroke-width="1" stroke-dasharray="3 3" fill="none"/><rect x="251" y="266" width="1624" height="1" fill="#3aa99e"/><rect x="250" y="520" width="2" height="31" fill="#000"/><rect x="254" y="563" width="1" height="36" fill="#000"/><rect x="253" y="565" width="3" height="14" fill="#000"/><rect x="254" y="566" width="1" height="12" fill="#f25555"/><rect x="258" y="506" width="1" height="59" fill="#000"/><rect x="257" y="512" width="3" height="36" fill="#000"/><rect x="258" y="513" width="1" height="34" fill="#3cb371"/><rect x="262" y="474" width="1" height="69" fill="#000"/><rect x="261" y="502" width="3" height="2" fill="#000"/><rect x="266" y="437" width="1" height="62" fill="#000"/><rect x="265" y="445" width="3" height="53" fill="#000"/><rect x="266" y="446" width="1" height="51" fill="#3cb371"/><rect x="270" y="420" width="1" height="43" fill="#000"/><rect x="269" y="443" width="3" height="18" fill="#000"/><rect x="270" y="444" width="1" height="16" fill="#3cb371"/><rect x="274" y="399" width="1" height="36" fill="#000"/><rect x="273" y="405" width="3" height="27" fill="#000"/><rect x="274" y="406" width="1" height="25" fill="#3cb371"/><rect x="278" y="400" width="1" height="24" fill="#000"/><rect x="277" y="412" width="3" height="9" fill="#000"/><rect x="278" y="413" width="1" height="7" fill="#f25555"/><rect x="282" y="444" width="1" height="52" fill="#000"/><rect x="281" y="453" width="3" height="28" fill="#000"/><rect x="282" y="454" width="1" height="26" fill="#f25555"/><rect x="286" y="450" width="1" height="31" fill="#000"/><rect x="285" y="458" width="3" height="14" fill="#000"/><rect x="286" y="459" width="1" height="12" fill="#3cb371"/><rect x="290" y="453" width="1" height="31" fill="#000"/><rect x="289" y="467" width="3" height="5" fill="#000"/><rect x="290" y="468" width="1" height="3" fill="#f25555"/><rect x="294" y="429" width="1" height="26" fill="#000"/><rect x="293" y="435" width="3" height="16" fill="#000"/><rect x="294" y="436" width="1" height="14" fill="#3cb371"/><rect x="298" y="422" width="1" height="32" fill="#000"/><rect x="297" y="423" width="3" height="31" fill="#000"/><rect x="298" y="424" width="1" height="29" fill="#f25555"/><rect x="302" y="432" width="1" height="33" fill="#000"/><rect x="301" y="441" width="3" height="15" fill="#000"/><rect x="302" y="442" width="1" height="13" fill="#3cb371"/><rect x="306" y="392" width="1" height="41" fill="#000"/><rect x="305" y="406" width="3" height="24" fill="#000"/><rect x="306" y="407" width="1" height="22" fill="#3cb371"/><rect x="310" y="412" width="1" height="25" fill="#000"/><rect x="309" y="413" width="3" height="19" fill="#000"/><rect x="310" y="414" width="1" height="17" fill="#f25555"/><rect x="314" y="407" width="1" height="19" fill="#000"/><rect x="313" y="414" width="3" height="2" fill="#000"/><rect x="318" y="418" width="1" height="16" fill="#000"/><rect x="317" y="420" width="3" height="9" fill="#000"/><rect x="318" y="421" width="1" height="7" fill="#f25555"/><rect x="322" y="421" width="1" height="12" fill="#000"/><rect x="321" y="422" width="3" height="6" fill="#000"/><rect x="322" y="423" width="1" height="4" fill="#f25555"/><rect x="326" y="401" width="1" height="25" fill="#000"/><rect x="325" y="404" width="3" height="19" fill="#000"/><rect x="326" y="405" width="1" height="17" fill="#3cb371"/><rect x="330" y="401" width="1" height="28" fill="#000"/><rect x="329" y="412" width="3" height="17" fill="#000"/><rect x="330" y="413" width="1" height="15" fill="#f25555"/><rect x="334" y="426" width="1" height="19" fill="#000"/><rect x="333" y="432" width="3" height="3" fill="#000"/><rect x="334" y="433" width="1" height="1" fill="#f25555"/><rect x="338" y="397" width="1" height="23" fill="#000"/><rect x="337" y="402" width="3" height="18" fill="#000"/><rect x="338" y="403" width="1" height="16" fill="#3cb371"/><rect x="342" y="401" width="1" height="21" fill="#000"/><rect x="341" y="402" width="3" height="17" fill="#000"/><rect x="342" y="403" width="1" height="15" fill="#f25555"/><rect x="346" y="418" width="1" height="15" fill="#000"/><rect x="345" y="420" width="3" height="2" fill="#000"/><rect x="350" y="403" width="1" height="15" fill="#000"/><rect x="349" y="412" width="3" height="4" fill="#000"/><rect x="350" y="413" width="1" height="2" fill="#3cb371"/><rect x="354" y="402" width="1" height="24" fill="#000"/><rect x="353" y="409" width="3" height="13" fill="#000"/><rect x="354" y="410" width="1" height="11" fill="#f25555"/><rect x="358" y="420" width="1" height="20" fill="#000"/><rect x="357" y="421" width="3" height="14" fill="#000"/><rect x="358" y="422" width="1" height="12" fill="#f25555"/><rect x="362" y="437" width="1" height="14" fill="#000"/><rect x="361" y="442" width="3" height="6" fill="#000"/><rect x="362" y="443" width="1" height="4" fill="#f25555"/><rect x="366" y="451" width="1" height="11" fill="#000"/><rect x="365" y="455" width="3" height="3" fill="#000"/><rect x="366" y="456" width="1" height="1" fill="#3cb371"/><rect x="370" y="444" width="1" height="18" fill="#000"/><rect x="369" y="447" width="3" height="13" fill="#000"/><rect x="370" y="448" width="1" height="11" fill="#3cb371"/><rect x="374" y="435" width="1" height="16" fill="#000"/><rect x="373" y="448" width="3" height="2" fill="#000"/><rect x="378" y="448" width="1" height="20" fill="#000"/><rect x="377" y="451" width="3" height="17" fill="#000"/><rect x="378" y="452" width="1" height="15" fill="#f25555"/><rect x="382" y="451" width="1" height="17" fill="#000"/><rect x="381" y="458" width="3" height="6" fill="#000"/><rect x="382" y="459" width="1" height="4" fill="#f25555"/><rect x="386" y="445" width="1" height="15" fill="#000"/><rect x="385" y="448" width="3" height="8" fill="#000"/><rect x="386" y="449" width="1" height="6" fill="#3cb371"/><rect x="390" y="452" width="1" height="12" fill="#000"/><rect x="389" y="455" width="3" height="4" fill="#000"/><rect x="390" y="456" width="1" height="2" fill="#3cb371"/><rect x="394" y="449" width="1" height="13" fill="#000"/><rect x="393" y="451" width="3" height="4" fill="#000"/><rect x="394" y="452" width="1" height="2" fill="#f25555"/><rect x="398" y="446" width="1" height="13" fill="#000"/><rect x="397" y="447" width="3" height="9" fill="#000"/><rect x="398" y="448" width="1" height="7" fill="#3cb371"/><rect x="402" y="438" width="1" height="18" fill="#000"/><rect x="401" y="442" width="3" height="9" fill="#000"/><rect x="402" y="443" width="1" height="7" fill="#3cb371"/><rect x="406" y="449" width="1" height="15" fill="#000"/><rect x="405" y="454" width="3" height="2" fill="#000"/><rect x="410" y="429" width="1" height="14" fill="#000"/><rect x="409" y="436" width="3" height="5" fill="#000"/><rect x="410" y="437" width="1" height="3" fill="#3cb371"/><rect x="414" y="435" width="1" height="12" fill="#000"/><rect x="413" y="438" width="3" height="9" fill="#000"/><rect x="414" y="439" width="1" height="7" fill="#f25555"/><rect x="418" y="431" width="1" height="17" fill="#000"/><rect x="417" y="440" width="3" height="6" fill="#000"/><rect x="418" y="441" width="1" height="4" fill="#3cb371"/><rect x="422" y="440" width="1" height="14" fill="#000"/><rect x="421" y="444" width="3" height="8" fill="#000"/><rect x="422" y="445" width="1" height="6" fill="#f25555"/><rect x="426" y="437" width="1" height="19" fill="#000"/><rect x="425" y="438" width="3" height="16" fill="#000"/><rect x="426" y="439" width="1" height="14" fill="#3cb371"/><rect x="430" y="425" width="1" height="13" fill="#000"/><rect x="429" y="435" width="3" height="2" fill="#000"/><rect x="434" y="417" width="1" height="17" fill="#000"/><rect x="433" y="418" width="3" height="17" fill="#000"/><rect x="434" y="419" width="1" height="15" fill="#3cb371"/><rect x="438" y="388" width="1" height="21" fill="#000"/><rect x="437" y="390" width="3" height="19" fill="#000"/><rect x="438" y="391" width="1" height="17" fill="#3cb371"/><rect x="442" y="376" width="1" height="18" fill="#000"/><rect x="441" y="378" width="3" height="12" fill="#000"/><rect x="442" y="379" width="1" height="10" fill="#3cb371"/><rect x="446" y="371" width="1" height="23" fill="#000"/><rect x="445" y="378" width="3" height="6" fill="#000"/><rect x="446" y="379" width="1" height="4" fill="#3cb371"/><rect x="450" y="365" width="1" height="20" fill="#000"/><rect x="449" y="376" width="3" height="3" fill="#000"/><rect x="450" y="377" width="1" height="1" fill="#3cb371"/><rect x="454" y="360" width="1" height="16" fill="#000"/><rect x="453" y="368" width="3" height="2" fill="#000"/><rect x="458" y="366" width="1" height="34" fill="#000"/><rect x="457" y="372" width="3" height="17" fill="#000"/><rect x="458" y="373" width="1" height="15" fill="#f25555"/><rect x="462" y="370" width="1" height="22" fill="#000"/><rect x="461" y="382" width="3" height="6" fill="#000"/><rect x="462" y="383" width="1" height="4" fill="#3cb371"/><rect x="466" y="364" width="1" height="25" fill="#000"/><rect x="465" y="365" width="3" height="24" fill="#000"/><rect x="466" y="366" width="1" height="22" fill="#3cb371"/><rect x="470" y="369" width="1" height="15" fill="#000"/><rect x="469" y="370" width="3" height="4" fill="#000"/><rect x="470" y="371" width="1" height="2" fill="#3cb371"/><rect x="474" y="364" width="1" height="16" fill="#000"/><rect x="473" y="366" width="3" height="10" fill="#000"/><rect x="474" y="367" width="1" height="8" fill="#f25555"/><rect x="478" y="383" width="1" height="23" fill="#000"/><rect x="477" y="384" width="3" height="14" fill="#000"/><rect x="478" y="385" width="1" height="12" fill="#f25555"/><rect x="482" y="389" width="1" height="21" fill="#000"/><rect x="481" y="394" width="3" height="8" fill="#000"/><rect x="482" y="395" width="1" height="6" fill="#f25555"/><rect x="486" y="391" width="1" height="27" fill="#000"/><rect x="485" y="397" width="3" height="21" fill="#000"/><rect x="486" y="398" width="1" height="19" fill="#3cb371"/><rect x="490" y="384" width="1" height="20" fill="#000"/><rect x="489" y="386" width="3" height="14" fill="#000"/><rect x="490" y="387" width="1" height="12" fill="#f25555"/><rect x="494" y="391" width="1" height="16" fill="#000"/><rect x="493" y="396" width="3" height="6" fill="#000"/><rect x="494" y="397" width="1" height="4" fill="#3cb371"/><rect x="498" y="394" width="1" height="11" fill="#000"/><rect x="497" y="396" width="3" height="2" fill="#000"/><rect x="502" y="390" width="1" height="25" fill="#000"/><rect x="501" y="392" width="3" height="23" fill="#000"/><rect x="502" y="393" width="1" height="21" fill="#f25555"/><rect x="506" y="398" width="1" height="19" fill="#000"/><rect x="505" y="402" width="3" height="13" fill="#000"/><rect x="506" y="403" width="1" height="11" fill="#3cb371"/><rect x="510" y="397" width="1" height="18" fill="#000"/><rect x="509" y="400" width="3" height="12" fill="#000"/><rect x="510" y="401" width="1" height="10" fill="#f25555"/><rect x="514" y="409" width="1" height="17" fill="#000"/><rect x="513" y="415" width="3" height="2" fill="#000"/><rect x="518" y="418" width="1" height="15" fill="#000"/><rect x="517" y="421" width="3" height="3" fill="#000"/><rect x="518" y="422" width="1" height="1" fill="#f25555"/><rect x="522" y="415" width="1" height="22" fill="#000"/><rect x="521" y="424" width="3" height="9" fill="#000"/><rect x="522" y="425" width="1" height="7" fill="#f25555"/><rect x="526" y="425" width="1" height="14" fill="#000"/><rect x="525" y="426" width="3" height="6" fill="#000"/><rect x="526" y="427" width="1" height="4" fill="#3cb371"/><rect x="530" y="416" width="1" height="13" fill="#000"/><rect x="529" y="420" width="3" height="4" fill="#000"/><rect x="530" y="421" width="1" height="2" fill="#3cb371"/><rect x="534" y="397" width="1" height="22" fill="#000"/><rect x="533" y="404" width="3" height="12" fill="#000"/><rect x="534" y="405" width="1" height="10" fill="#3cb371"/><rect x="538" y="394" width="1" height="14" fill="#000"/><rect x="537" y="398" width="3" height="6" fill="#000"/><rect x="538" y="399" width="1" height="4" fill="#f25555"/><rect x="542" y="396" width="1" height="13" fill="#000"/><rect x="541" y="397" width="3" height="6" fill="#000"/><rect x="542" y="398" width="1" height="4" fill="#f25555"/><rect x="546" y="398" width="1" height="12" fill="#000"/><rect x="545" y="402" width="3" height="8" fill="#000"/><rect x="546" y="403" width="1" height="6" fill="#3cb371"/><rect x="550" y="382" width="1" height="19" fill="#000"/><rect x="549" y="384" width="3" height="17" fill="#000"/><rect x="550" y="385" width="1" height="15" fill="#3cb371"/><rect x="554" y="384" width="1" height="14" fill="#000"/><rect x="553" y="388" width="3" height="3" fill="#000"/><rect x="554" y="389" width="1" height="1" fill="#3cb371"/><rect x="558" y="363" width="1" height="26" fill="#000"/><rect x="557" y="368" width="3" height="21" fill="#000"/><rect x="558" y="369" width="1" height="19" fill="#3cb371"/><rect x="562" y="360" width="1" height="20" fill="#000"/><rect x="561" y="369" width="3" height="8" fill="#000"/><rect x="562" y="370" width="1" height="6" fill="#f25555"/><rect x="566" y="354" width="1" height="23" fill="#000"/><rect x="565" y="359" width="3" height="11" fill="#000"/><rect x="566" y="360" width="1" height="9" fill="#3cb371"/><rect x="570" y="349" width="1" height="22" fill="#000"/><rect x="569" y="359" width="3" height="12" fill="#000"/><rect x="570" y="360" width="1" height="10" fill="#f25555"/><rect x="574" y="340" width="1" height="29" fill="#000"/><rect x="573" y="344" width="3" height="25" fill="#000"/><rect x="574" y="345" width="1" height="23" fill="#3cb371"/><rect x="578" y="319" width="1" height="22" fill="#000"/><rect x="577" y="325" width="3" height="15" fill="#000"/><rect x="578" y="326" width="1" height="13" fill="#3cb371"/><rect x="582" y="318" width="1" height="13" fill="#000"/><rect x="581" y="325" width="3" height="4" fill="#000"/><rect x="582" y="326" width="1" height="2" fill="#f25555"/><rect x="586" y="314" width="1" height="14" fill="#000"/><rect x="585" y="322" width="3" height="5" fill="#000"/><rect x="586" y="323" width="1" height="3" fill="#3cb371"/><rect x="590" y="306" width="1" height="19" fill="#000"/><rect x="589" y="311" width="3" height="11" fill="#000"/><rect x="590" y="312" width="1" height="9" fill="#3cb371"/><rect x="594" y="301" width="1" height="15" fill="#000"/><rect x="593" y="310" width="3" height="2" fill="#000"/><rect x="598" y="298" width="1" height="21" fill="#000"/><rect x="597" y="310" width="3" height="2" fill="#000"/><rect x="602" y="309" width="1" height="15" fill="#000"/><rect x="601" y="309" width="3" height="11" fill="#000"/><rect x="602" y="310" width="1" height="9" fill="#f25555"/><rect x="606" y="304" width="1" height="14" fill="#000"/><rect x="605" y="312" width="3" height="4" fill="#000"/><rect x="606" y="313" width="1" height="2" fill="#3cb371"/><rect x="610" y="299" width="1" height="15" fill="#000"/><rect x="609" y="308" width="3" height="2" fill="#000"/><rect x="614" y="306" width="1" height="10" fill="#000"/><rect x="613" y="306" width="3" height="5" fill="#000"/><rect x="614" y="307" width="1" height="3" fill="#3cb371"/><rect x="618" y="305" width="1" height="20" fill="#000"/><rect x="617" y="309" width="3" height="4" fill="#000"/><rect x="618" y="310" width="1" height="2" fill="#f25555"/><rect x="622" y="313" width="1" height="10" fill="#000"/><rect x="621" y="315" width="3" height="6" fill="#000"/><rect x="622" y="316" width="1" height="4" fill="#f25555"/><rect x="626" y="298" width="1" height="23" fill="#000"/><rect x="625" y="299" width="3" height="19" fill="#000"/><rect x="626" y="300" width="1" height="17" fill="#3cb371"/><rect x="630" y="297" width="1" height="11" fill="#000"/><rect x="629" y="298" width="3" height="5" fill="#000"/><rect x="630" y="299" width="1" height="3" fill="#f25555"/><rect x="634" y="300" width="1" height="10" fill="#000"/><rect x="633" y="305" width="3" height="2" fill="#000"/><rect x="638" y="287" width="1" height="18" fill="#000"/><rect x="637" y="292" width="3" height="10" fill="#000"/><rect x="638" y="293" width="1" height="8" fill="#3cb371"/><rect x="642" y="288" width="1" height="18" fill="#000"/><rect x="641" y="295" width="3" height="8" fill="#000"/><rect x="642" y="296" width="1" height="6" fill="#f25555"/><rect x="646" y="301" width="1" height="22" fill="#000"/><rect x="645" y="303" width="3" height="16" fill="#000"/><rect x="646" y="304" width="1" height="14" fill="#f25555"/><rect x="650" y="296" width="1" height="22" fill="#000"/><rect x="649" y="300" width="3" height="16" fill="#000"/><rect x="650" y="301" width="1" height="14" fill="#3cb371"/><rect x="654" y="298" width="1" height="8" fill="#000"/><rect x="653" y="300" width="3" height="6" fill="#000"/><rect x="654" y="301" width="1" height="4" fill="#3cb371"/><rect x="658" y="302" width="1" height="11" fill="#000"/><rect x="657" y="311" width="3" height="2" fill="#000"/><rect x="662" y="299" width="1" height="14" fill="#000"/><rect x="661" y="304" width="3" height="9" fill="#000"/><rect x="662" y="305" width="1" height="7" fill="#3cb371"/><rect x="666" y="299" width="1" height="9" fill="#000"/><rect x="665" y="300" width="3" height="6" fill="#000"/><rect x="666" y="301" width="1" height="4" fill="#f25555"/><rect x="670" y="301" width="1" height="7" fill="#000"/><rect x="669" y="303" width="3" height="5" fill="#000"/><rect x="670" y="304" width="1" height="3" fill="#f25555"/><rect x="674" y="302" width="1" height="8" fill="#000"/><rect x="673" y="307" width="3" height="2" fill="#000"/><rect x="678" y="304" width="1" height="8" fill="#000"/><rect x="677" y="306" width="3" height="3" fill="#000"/><rect x="678" y="307" width="1" height="1" fill="#3cb371"/><rect x="682" y="305" width="1" height="8" fill="#000"/><rect x="681" y="305" width="3" height="2" fill="#000"/><rect x="686" y="307" width="1" height="10" fill="#000"/><rect x="685" y="308" width="3" height="2" fill="#000"/><rect x="690" y="309" width="1" height="10" fill="#5fc08a"/><rect x="689" y="315" width="3" height="1" fill="#5fc08a"/><rect x="694" y="311" width="1" height="13" fill="#000"/><rect x="693" y="316" width="3" height="2" fill="#000"/><rect x="698" y="312" width="1" height="10" fill="#000"/><rect x="697" y="313" width="3" height="5" fill="#000"/><rect x="698" y="314" width="1" height="3" fill="#3cb371"/><rect x="702" y="302" width="1" height="17" fill="#000"/><rect x="701" y="313" width="3" height="3" fill="#000"/><rect x="702" y="314" width="1" height="1" fill="#f25555"/><rect x="706" y="318" width="1" height="11" fill="#000"/><rect x="705" y="318" width="3" height="3" fill="#000"/><rect x="706" y="319" width="1" height="1" fill="#f25555"/><rect x="710" y="286" width="1" height="39" fill="#000"/><rect x="709" y="290" width="3" height="36" fill="#000"/><rect x="710" y="291" width="1" height="34" fill="#3cb371"/><rect x="714" y="283" width="1" height="36" fill="#000"/><rect x="713" y="289" width="3" height="23" fill="#000"/><rect x="714" y="290" width="1" height="21" fill="#f25555"/><rect x="718" y="307" width="1" height="24" fill="#000"/><rect x="717" y="308" width="3" height="13" fill="#000"/><rect x="718" y="309" width="1" height="11" fill="#f25555"/><rect x="722" y="310" width="1" height="17" fill="#000"/><rect x="721" y="317" width="3" height="2" fill="#000"/><rect x="726" y="294" width="1" height="18" fill="#000"/><rect x="725" y="306" width="3" height="4" fill="#000"/><rect x="726" y="307" width="1" height="2" fill="#3cb371"/><rect x="730" y="308" width="1" height="16" fill="#000"/><rect x="729" y="315" width="3" height="8" fill="#000"/><rect x="730" y="316" width="1" height="6" fill="#f25555"/><rect x="734" y="315" width="1" height="12" fill="#000"/><rect x="733" y="318" width="3" height="2" fill="#000"/><rect x="738" y="302" width="1" height="17" fill="#000"/><rect x="737" y="308" width="3" height="8" fill="#000"/><rect x="738" y="309" width="1" height="6" fill="#3cb371"/><rect x="742" y="261" width="1" height="19" fill="#000"/><rect x="741" y="270" width="3" height="8" fill="#000"/><rect x="742" y="271" width="1" height="6" fill="#3cb371"/><rect x="746" y="297" width="1" height="20" fill="#000"/><rect x="745" y="300" width="3" height="13" fill="#000"/><rect x="746" y="301" width="1" height="11" fill="#f25555"/><rect x="750" y="312" width="1" height="13" fill="#000"/><rect x="749" y="314" width="3" height="9" fill="#000"/><rect x="750" y="315" width="1" height="7" fill="#3cb371"/><rect x="754" y="307" width="1" height="18" fill="#000"/><rect x="753" y="309" width="3" height="14" fill="#000"/><rect x="754" y="310" width="1" height="12" fill="#f25555"/><rect x="758" y="322" width="1" height="16" fill="#000"/><rect x="757" y="323" width="3" height="5" fill="#000"/><rect x="758" y="324" width="1" height="3" fill="#3cb371"/><rect x="762" y="313" width="1" height="17" fill="#000"/><rect x="761" y="318" width="3" height="2" fill="#000"/><rect x="766" y="318" width="1" height="15" fill="#000"/><rect x="765" y="321" width="3" height="12" fill="#000"/><rect x="766" y="322" width="1" height="10" fill="#f25555"/><rect x="770" y="313" width="1" height="22" fill="#000"/><rect x="769" y="319" width="3" height="14" fill="#000"/><rect x="770" y="320" width="1" height="12" fill="#3cb371"/><rect x="774" y="307" width="1" height="19" fill="#000"/><rect x="773" y="308" width="3" height="18" fill="#000"/><rect x="774" y="309" width="1" height="16" fill="#3cb371"/><rect x="778" y="296" width="1" height="11" fill="#000"/><rect x="777" y="302" width="3" height="4" fill="#000"/><rect x="778" y="303" width="1" height="2" fill="#3cb371"/><rect x="782" y="296" width="1" height="12" fill="#000"/><rect x="781" y="302" width="3" height="4" fill="#000"/><rect x="782" y="303" width="1" height="2" fill="#f25555"/><rect x="786" y="313" width="1" height="35" fill="#000"/><rect x="785" y="314" width="3" height="7" fill="#000"/><rect x="786" y="315" width="1" height="5" fill="#f25555"/><rect x="790" y="302" width="1" height="17" fill="#000"/><rect x="789" y="305" width="3" height="13" fill="#000"/><rect x="790" y="306" width="1" height="11" fill="#3cb371"/><rect x="794" y="293" width="1" height="25" fill="#000"/><rect x="793" y="310" width="3" height="6" fill="#000"/><rect x="794" y="311" width="1" height="4" fill="#3cb371"/><rect x="798" y="288" width="1" height="17" fill="#000"/><rect x="797" y="291" width="3" height="14" fill="#000"/><rect x="798" y="292" width="1" height="12" fill="#3cb371"/><rect x="802" y="279" width="1" height="21" fill="#000"/><rect x="801" y="286" width="3" height="4" fill="#000"/><rect x="802" y="287" width="1" height="2" fill="#3cb371"/><rect x="806" y="264" width="1" height="24" fill="#000"/><rect x="805" y="266" width="3" height="14" fill="#000"/><rect x="806" y="267" width="1" height="12" fill="#3cb371"/><rect x="810" y="253" width="1" height="15" fill="#000"/><rect x="809" y="255" width="3" height="9" fill="#000"/><rect x="810" y="256" width="1" height="7" fill="#3cb371"/><rect x="814" y="249" width="1" height="10" fill="#000"/><rect x="813" y="251" width="3" height="2" fill="#000"/><rect x="818" y="237" width="1" height="18" fill="#000"/><rect x="817" y="244" width="3" height="6" fill="#000"/><rect x="818" y="245" width="1" height="4" fill="#3cb371"/><rect x="822" y="249" width="1" height="14" fill="#000"/><rect x="821" y="249" width="3" height="6" fill="#000"/><rect x="822" y="250" width="1" height="4" fill="#f25555"/><rect x="826" y="251" width="1" height="12" fill="#000"/><rect x="825" y="257" width="3" height="2" fill="#000"/><rect x="830" y="259" width="1" height="12" fill="#000"/><rect x="829" y="264" width="3" height="5" fill="#000"/><rect x="830" y="265" width="1" height="3" fill="#3cb371"/><rect x="834" y="242" width="1" height="20" fill="#000"/><rect x="833" y="243" width="3" height="19" fill="#000"/><rect x="834" y="244" width="1" height="17" fill="#3cb371"/><rect x="838" y="239" width="1" height="26" fill="#000"/><rect x="837" y="242" width="3" height="19" fill="#000"/><rect x="838" y="243" width="1" height="17" fill="#f25555"/><rect x="842" y="247" width="1" height="16" fill="#000"/><rect x="841" y="256" width="3" height="4" fill="#000"/><rect x="842" y="257" width="1" height="2" fill="#3cb371"/><rect x="846" y="252" width="1" height="21" fill="#000"/><rect x="845" y="261" width="3" height="5" fill="#000"/><rect x="846" y="262" width="1" height="3" fill="#f25555"/><rect x="850" y="247" width="1" height="15" fill="#000"/><rect x="849" y="252" width="3" height="8" fill="#000"/><rect x="850" y="253" width="1" height="6" fill="#3cb371"/><rect x="854" y="243" width="1" height="12" fill="#000"/><rect x="853" y="248" width="3" height="3" fill="#000"/><rect x="854" y="249" width="1" height="1" fill="#f25555"/><rect x="858" y="251" width="1" height="16" fill="#000"/><rect x="857" y="252" width="3" height="4" fill="#000"/><rect x="858" y="253" width="1" height="2" fill="#3cb371"/><rect x="862" y="243" width="1" height="16" fill="#000"/><rect x="861" y="250" width="3" height="2" fill="#000"/><rect x="866" y="247" width="1" height="20" fill="#000"/><rect x="865" y="257" width="3" height="9" fill="#000"/><rect x="866" y="258" width="1" height="7" fill="#f25555"/><rect x="870" y="258" width="1" height="24" fill="#000"/><rect x="869" y="268" width="3" height="2" fill="#000"/><rect x="874" y="265" width="1" height="22" fill="#000"/><rect x="873" y="272" width="3" height="7" fill="#000"/><rect x="874" y="273" width="1" height="5" fill="#f25555"/><rect x="878" y="253" width="1" height="21" fill="#000"/><rect x="877" y="257" width="3" height="10" fill="#000"/><rect x="878" y="258" width="1" height="8" fill="#3cb371"/><rect x="882" y="237" width="1" height="18" fill="#000"/><rect x="881" y="248" width="3" height="2" fill="#000"/><rect x="886" y="260" width="1" height="21" fill="#000"/><rect x="885" y="267" width="3" height="10" fill="#000"/><rect x="886" y="268" width="1" height="8" fill="#f25555"/><rect x="890" y="245" width="1" height="19" fill="#000"/><rect x="889" y="259" width="3" height="4" fill="#000"/><rect x="890" y="260" width="1" height="2" fill="#f25555"/><rect x="894" y="247" width="1" height="18" fill="#000"/><rect x="893" y="251" width="3" height="15" fill="#000"/><rect x="894" y="252" width="1" height="13" fill="#3cb371"/><rect x="898" y="194" width="1" height="62" fill="#000"/><rect x="897" y="204" width="3" height="51" fill="#000"/><rect x="898" y="205" width="1" height="49" fill="#f25555"/><rect x="902" y="242" width="1" height="14" fill="#000"/><rect x="901" y="242" width="3" height="7" fill="#000"/><rect x="902" y="243" width="1" height="5" fill="#f25555"/><rect x="906" y="222" width="1" height="18" fill="#000"/><rect x="905" y="231" width="3" height="9" fill="#000"/><rect x="906" y="232" width="1" height="7" fill="#3cb371"/><rect x="910" y="231" width="1" height="17" fill="#000"/><rect x="909" y="236" width="3" height="5" fill="#000"/><rect x="910" y="237" width="1" height="3" fill="#f25555"/><rect x="914" y="229" width="1" height="11" fill="#000"/><rect x="913" y="235" width="3" height="2" fill="#000"/><rect x="918" y="227" width="1" height="18" fill="#000"/><rect x="917" y="228" width="3" height="3" fill="#000"/><rect x="918" y="229" width="1" height="1" fill="#3cb371"/><rect x="922" y="223" width="1" height="21" fill="#000"/><rect x="921" y="230" width="3" height="13" fill="#000"/><rect x="922" y="231" width="1" height="11" fill="#f25555"/><rect x="926" y="238" width="1" height="13" fill="#000"/><rect x="925" y="244" width="3" height="7" fill="#000"/><rect x="926" y="245" width="1" height="5" fill="#f25555"/><rect x="930" y="252" width="1" height="9" fill="#000"/><rect x="929" y="254" width="3" height="4" fill="#000"/><rect x="930" y="255" width="1" height="2" fill="#f25555"/><rect x="934" y="244" width="1" height="11" fill="#000"/><rect x="933" y="251" width="3" height="4" fill="#000"/><rect x="934" y="252" width="1" height="2" fill="#f25555"/><rect x="938" y="250" width="1" height="20" fill="#000"/><rect x="937" y="251" width="3" height="13" fill="#000"/><rect x="938" y="252" width="1" height="11" fill="#f25555"/><rect x="942" y="252" width="1" height="13" fill="#000"/><rect x="941" y="254" width="3" height="6" fill="#000"/><rect x="942" y="255" width="1" height="4" fill="#f25555"/><rect x="946" y="248" width="1" height="16" fill="#000"/><rect x="945" y="248" width="3" height="12" fill="#000"/><rect x="946" y="249" width="1" height="10" fill="#3cb371"/><rect x="950" y="251" width="1" height="11" fill="#000"/><rect x="949" y="257" width="3" height="2" fill="#000"/><rect x="954" y="259" width="1" height="19" fill="#000"/><rect x="953" y="259" width="3" height="16" fill="#000"/><rect x="954" y="260" width="1" height="14" fill="#f25555"/><rect x="958" y="252" width="1" height="17" fill="#000"/><rect x="957" y="266" width="3" height="3" fill="#000"/><rect x="958" y="267" width="1" height="1" fill="#f25555"/><rect x="962" y="265" width="1" height="18" fill="#000"/><rect x="961" y="266" width="3" height="10" fill="#000"/><rect x="962" y="267" width="1" height="8" fill="#3cb371"/><rect x="966" y="263" width="1" height="18" fill="#000"/><rect x="965" y="268" width="3" height="10" fill="#000"/><rect x="966" y="269" width="1" height="8" fill="#f25555"/><rect x="970" y="274" width="1" height="19" fill="#000"/><rect x="969" y="276" width="3" height="10" fill="#000"/><rect x="970" y="277" width="1" height="8" fill="#f25555"/><rect x="974" y="272" width="1" height="14" fill="#000"/><rect x="973" y="276" width="3" height="10" fill="#000"/><rect x="974" y="277" width="1" height="8" fill="#3cb371"/><rect x="978" y="266" width="1" height="24" fill="#000"/><rect x="977" y="273" width="3" height="13" fill="#000"/><rect x="978" y="274" width="1" height="11" fill="#3cb371"/><rect x="982" y="271" width="1" height="16" fill="#000"/><rect x="981" y="272" width="3" height="2" fill="#000"/><rect x="986" y="268" width="1" height="13" fill="#000"/><rect x="985" y="277" width="3" height="2" fill="#000"/><rect x="990" y="271" width="1" height="10" fill="#000"/><rect x="989" y="272" width="3" height="4" fill="#000"/><rect x="990" y="273" width="1" height="2" fill="#3cb371"/><rect x="994" y="256" width="1" height="21" fill="#000"/><rect x="993" y="264" width="3" height="12" fill="#000"/><rect x="994" y="265" width="1" height="10" fill="#f25555"/><rect x="998" y="255" width="1" height="23" fill="#000"/><rect x="997" y="259" width="3" height="18" fill="#000"/><rect x="998" y="260" width="1" height="16" fill="#3cb371"/><rect x="1002" y="252" width="1" height="16" fill="#000"/><rect x="1001" y="252" width="3" height="14" fill="#000"/><rect x="1002" y="253" width="1" height="12" fill="#f25555"/><rect x="1006" y="248" width="1" height="13" fill="#000"/><rect x="1005" y="249" width="3" height="10" fill="#000"/><rect x="1006" y="250" width="1" height="8" fill="#f25555"/><rect x="1010" y="253" width="1" height="18" fill="#000"/><rect x="1009" y="258" width="3" height="7" fill="#000"/><rect x="1010" y="259" width="1" height="5" fill="#f25555"/><rect x="1014" y="263" width="1" height="20" fill="#000"/><rect x="1013" y="266" width="3" height="9" fill="#000"/><rect x="1014" y="267" width="1" height="7" fill="#3cb371"/><rect x="1018" y="256" width="1" height="11" fill="#000"/><rect x="1017" y="262" width="3" height="5" fill="#000"/><rect x="1018" y="263" width="1" height="3" fill="#3cb371"/><rect x="1022" y="252" width="1" height="15" fill="#000"/><rect x="1021" y="256" width="3" height="11" fill="#000"/><rect x="1022" y="257" width="1" height="9" fill="#f25555"/><rect x="1026" y="257" width="1" height="10" fill="#000"/><rect x="1025" y="259" width="3" height="8" fill="#000"/><rect x="1026" y="260" width="1" height="6" fill="#3cb371"/><rect x="1030" y="249" width="1" height="9" fill="#000"/><rect x="1029" y="253" width="3" height="5" fill="#000"/><rect x="1030" y="254" width="1" height="3" fill="#3cb371"/><rect x="1034" y="249" width="1" height="9" fill="#000"/><rect x="1033" y="250" width="3" height="6" fill="#000"/><rect x="1034" y="251" width="1" height="4" fill="#f25555"/><rect x="1038" y="245" width="1" height="9" fill="#000"/><rect x="1037" y="248" width="3" height="6" fill="#000"/><rect x="1038" y="249" width="1" height="4" fill="#3cb371"/><rect x="1042" y="242" width="1" height="10" fill="#000"/><rect x="1041" y="244" width="3" height="4" fill="#000"/><rect x="1042" y="245" width="1" height="2" fill="#3cb371"/><rect x="1046" y="239" width="1" height="35" fill="#000"/><rect x="1045" y="241" width="3" height="27" fill="#000"/><rect x="1046" y="242" width="1" height="25" fill="#f25555"/><rect x="1050" y="257" width="1" height="12" fill="#000"/><rect x="1049" y="262" width="3" height="3" fill="#000"/><rect x="1050" y="263" width="1" height="1" fill="#3cb371"/><rect x="1054" y="211" width="1" height="39" fill="#000"/><rect x="1053" y="221" width="3" height="28" fill="#000"/><rect x="1054" y="222" width="1" height="26" fill="#3cb371"/><rect x="1058" y="200" width="1" height="18" fill="#000"/><rect x="1057" y="206" width="3" height="7" fill="#000"/><rect x="1058" y="207" width="1" height="5" fill="#f25555"/><rect x="1062" y="191" width="1" height="17" fill="#000"/><rect x="1061" y="192" width="3" height="12" fill="#000"/><rect x="1062" y="193" width="1" height="10" fill="#3cb371"/><rect x="1066" y="198" width="1" height="19" fill="#000"/><rect x="1065" y="198" width="3" height="11" fill="#000"/><rect x="1066" y="199" width="1" height="9" fill="#f25555"/><rect x="1070" y="198" width="1" height="24" fill="#000"/><rect x="1069" y="207" width="3" height="2" fill="#000"/><rect x="1074" y="180" width="1" height="20" fill="#000"/><rect x="1073" y="185" width="3" height="15" fill="#000"/><rect x="1074" y="186" width="1" height="13" fill="#3cb371"/><rect x="1078" y="175" width="1" height="18" fill="#000"/><rect x="1077" y="178" width="3" height="13" fill="#000"/><rect x="1078" y="179" width="1" height="11" fill="#3cb371"/><rect x="1082" y="169" width="1" height="14" fill="#000"/><rect x="1081" y="181" width="3" height="3" fill="#000"/><rect x="1082" y="182" width="1" height="1" fill="#f25555"/><rect x="1086" y="170" width="1" height="16" fill="#000"/><rect x="1085" y="174" width="3" height="12" fill="#000"/><rect x="1086" y="175" width="1" height="10" fill="#3cb371"/><rect x="1090" y="150" width="1" height="29" fill="#000"/><rect x="1089" y="160" width="3" height="18" fill="#000"/><rect x="1090" y="161" width="1" height="16" fill="#3cb371"/><rect x="1094" y="153" width="1" height="12" fill="#000"/><rect x="1093" y="158" width="3" height="7" fill="#000"/><rect x="1094" y="159" width="1" height="5" fill="#f25555"/><rect x="1098" y="155" width="1" height="13" fill="#000"/><rect x="1097" y="159" width="3" height="3" fill="#000"/><rect x="1098" y="160" width="1" height="1" fill="#3cb371"/><rect x="1102" y="121" width="1" height="34" fill="#000"/><rect x="1101" y="128" width="3" height="27" fill="#000"/><rect x="1102" y="129" width="1" height="25" fill="#3cb371"/><rect x="1106" y="126" width="1" height="28" fill="#000"/><rect x="1105" y="138" width="3" height="11" fill="#000"/><rect x="1106" y="139" width="1" height="9" fill="#f25555"/><rect x="1110" y="160" width="1" height="50" fill="#000"/><rect x="1109" y="164" width="3" height="40" fill="#000"/><rect x="1110" y="165" width="1" height="38" fill="#f25555"/><rect x="1114" y="163" width="1" height="40" fill="#000"/><rect x="1113" y="178" width="3" height="25" fill="#000"/><rect x="1114" y="179" width="1" height="23" fill="#3cb371"/><rect x="1118" y="178" width="1" height="25" fill="#000"/><rect x="1117" y="186" width="3" height="10" fill="#000"/><rect x="1118" y="187" width="1" height="8" fill="#f25555"/><rect x="1122" y="175" width="1" height="21" fill="#000"/><rect x="1121" y="184" width="3" height="3" fill="#000"/><rect x="1122" y="185" width="1" height="1" fill="#f25555"/><rect x="1126" y="156" width="1" height="25" fill="#000"/><rect x="1125" y="174" width="3" height="3" fill="#000"/><rect x="1126" y="175" width="1" height="1" fill="#3cb371"/><rect x="1130" y="162" width="1" height="13" fill="#000"/><rect x="1129" y="169" width="3" height="4" fill="#000"/><rect x="1130" y="170" width="1" height="2" fill="#f25555"/><rect x="1134" y="166" width="1" height="12" fill="#000"/><rect x="1133" y="170" width="3" height="3" fill="#000"/><rect x="1134" y="171" width="1" height="1" fill="#f25555"/><rect x="1138" y="155" width="1" height="18" fill="#000"/><rect x="1137" y="166" width="3" height="4" fill="#000"/><rect x="1138" y="167" width="1" height="2" fill="#3cb371"/><rect x="1142" y="153" width="1" height="20" fill="#000"/><rect x="1141" y="160" width="3" height="9" fill="#000"/><rect x="1142" y="161" width="1" height="7" fill="#f25555"/><rect x="1146" y="157" width="1" height="16" fill="#000"/><rect x="1145" y="163" width="3" height="2" fill="#000"/><rect x="1150" y="154" width="1" height="14" fill="#000"/><rect x="1149" y="154" width="3" height="9" fill="#000"/><rect x="1150" y="155" width="1" height="7" fill="#f25555"/><rect x="1154" y="153" width="1" height="13" fill="#000"/><rect x="1153" y="157" width="3" height="6" fill="#000"/><rect x="1154" y="158" width="1" height="4" fill="#f25555"/><rect x="1158" y="160" width="1" height="18" fill="#000"/><rect x="1157" y="162" width="3" height="9" fill="#000"/><rect x="1158" y="163" width="1" height="7" fill="#f25555"/><rect x="1162" y="168" width="1" height="27" fill="#000"/><rect x="1161" y="169" width="3" height="23" fill="#000"/><rect x="1162" y="170" width="1" height="21" fill="#f25555"/><rect x="1166" y="194" width="1" height="16" fill="#000"/><rect x="1165" y="197" width="3" height="4" fill="#000"/><rect x="1166" y="198" width="1" height="2" fill="#3cb371"/><rect x="1170" y="190" width="1" height="15" fill="#000"/><rect x="1169" y="196" width="3" height="2" fill="#000"/><rect x="1174" y="202" width="1" height="26" fill="#000"/><rect x="1173" y="205" width="3" height="21" fill="#000"/><rect x="1174" y="206" width="1" height="19" fill="#f25555"/><rect x="1178" y="230" width="1" height="34" fill="#000"/><rect x="1177" y="231" width="3" height="28" fill="#000"/><rect x="1178" y="232" width="1" height="26" fill="#f25555"/><rect x="1182" y="259" width="1" height="19" fill="#000"/><rect x="1181" y="262" width="3" height="2" fill="#000"/><rect x="1186" y="266" width="1" height="11" fill="#000"/><rect x="1185" y="267" width="3" height="6" fill="#000"/><rect x="1186" y="268" width="1" height="4" fill="#f25555"/><rect x="1190" y="265" width="1" height="17" fill="#000"/><rect x="1189" y="269" width="3" height="12" fill="#000"/><rect x="1190" y="270" width="1" height="10" fill="#3cb371"/><rect x="1194" y="253" width="1" height="23" fill="#000"/><rect x="1193" y="268" width="3" height="8" fill="#000"/><rect x="1194" y="269" width="1" height="6" fill="#f25555"/><rect x="1198" y="236" width="1" height="26" fill="#000"/><rect x="1197" y="249" width="3" height="13" fill="#000"/><rect x="1198" y="250" width="1" height="11" fill="#3cb371"/><rect x="1202" y="243" width="1" height="11" fill="#000"/><rect x="1201" y="246" width="3" height="8" fill="#000"/><rect x="1202" y="247" width="1" height="6" fill="#f25555"/><rect x="1206" y="254" width="1" height="37" fill="#000"/><rect x="1205" y="255" width="3" height="31" fill="#000"/><rect x="1206" y="256" width="1" height="29" fill="#f25555"/><rect x="1210" y="279" width="1" height="29" fill="#000"/><rect x="1209" y="294" width="3" height="6" fill="#000"/><rect x="1210" y="295" width="1" height="4" fill="#f25555"/><rect x="1214" y="301" width="1" height="30" fill="#000"/><rect x="1213" y="302" width="3" height="4" fill="#000"/><rect x="1214" y="303" width="1" height="2" fill="#f25555"/><rect x="1218" y="286" width="1" height="22" fill="#000"/><rect x="1217" y="303" width="3" height="2" fill="#000"/><rect x="1222" y="262" width="1" height="24" fill="#000"/><rect x="1221" y="269" width="3" height="17" fill="#000"/><rect x="1222" y="270" width="1" height="15" fill="#3cb371"/><rect x="1226" y="261" width="1" height="23" fill="#000"/><rect x="1225" y="265" width="3" height="14" fill="#000"/><rect x="1226" y="266" width="1" height="12" fill="#3cb371"/><rect x="1230" y="252" width="1" height="13" fill="#000"/><rect x="1229" y="260" width="3" height="2" fill="#000"/><rect x="1234" y="247" width="1" height="23" fill="#000"/><rect x="1233" y="251" width="3" height="15" fill="#000"/><rect x="1234" y="252" width="1" height="13" fill="#3cb371"/><rect x="1238" y="245" width="1" height="14" fill="#000"/><rect x="1237" y="248" width="3" height="6" fill="#000"/><rect x="1238" y="249" width="1" height="4" fill="#f25555"/><rect x="1242" y="244" width="1" height="14" fill="#000"/><rect x="1241" y="255" width="3" height="3" fill="#000"/><rect x="1242" y="256" width="1" height="1" fill="#3cb371"/><rect x="1246" y="266" width="1" height="18" fill="#000"/><rect x="1245" y="267" width="3" height="16" fill="#000"/><rect x="1246" y="268" width="1" height="14" fill="#f25555"/><rect x="1250" y="288" width="1" height="22" fill="#000"/><rect x="1249" y="288" width="3" height="13" fill="#000"/><rect x="1250" y="289" width="1" height="11" fill="#f25555"/><rect x="1254" y="284" width="1" height="29" fill="#000"/><rect x="1253" y="301" width="3" height="4" fill="#000"/><rect x="1254" y="302" width="1" height="2" fill="#f25555"/><rect x="1258" y="286" width="1" height="16" fill="#000"/><rect x="1257" y="294" width="3" height="5" fill="#000"/><rect x="1258" y="295" width="1" height="3" fill="#3cb371"/><rect x="1262" y="266" width="1" height="30" fill="#000"/><rect x="1261" y="269" width="3" height="23" fill="#000"/><rect x="1262" y="270" width="1" height="21" fill="#3cb371"/><rect x="1266" y="273" width="1" height="14" fill="#000"/><rect x="1265" y="276" width="3" height="7" fill="#000"/><rect x="1266" y="277" width="1" height="5" fill="#f25555"/><rect x="1270" y="272" width="1" height="15" fill="#000"/><rect x="1269" y="276" width="3" height="9" fill="#000"/><rect x="1270" y="277" width="1" height="7" fill="#3cb371"/><rect x="1274" y="268" width="1" height="17" fill="#000"/><rect x="1273" y="269" width="3" height="11" fill="#000"/><rect x="1274" y="270" width="1" height="9" fill="#3cb371"/><rect x="1278" y="256" width="1" height="17" fill="#000"/><rect x="1277" y="262" width="3" height="4" fill="#000"/><rect x="1278" y="263" width="1" height="2" fill="#3cb371"/><rect x="1282" y="263" width="1" height="10" fill="#000"/><rect x="1281" y="267" width="3" height="2" fill="#000"/><rect x="1286" y="248" width="1" height="17" fill="#000"/><rect x="1285" y="251" width="3" height="14" fill="#000"/><rect x="1286" y="252" width="1" height="12" fill="#3cb371"/><rect x="1290" y="241" width="1" height="15" fill="#000"/><rect x="1289" y="251" width="3" height="3" fill="#000"/><rect x="1290" y="252" width="1" height="1" fill="#3cb371"/><rect x="1294" y="231" width="1" height="11" fill="#000"/><rect x="1293" y="238" width="3" height="2" fill="#000"/><rect x="1298" y="229" width="1" height="20" fill="#000"/><rect x="1297" y="230" width="3" height="15" fill="#000"/><rect x="1298" y="231" width="1" height="13" fill="#3cb371"/><rect x="1302" y="225" width="1" height="15" fill="#000"/><rect x="1301" y="232" width="3" height="2" fill="#000"/><rect x="1306" y="221" width="1" height="12" fill="#000"/><rect x="1305" y="226" width="3" height="4" fill="#000"/><rect x="1306" y="227" width="1" height="2" fill="#f25555"/><rect x="1310" y="224" width="1" height="7" fill="#000"/><rect x="1309" y="226" width="3" height="2" fill="#000"/><rect x="1314" y="223" width="1" height="12" fill="#000"/><rect x="1313" y="230" width="3" height="3" fill="#000"/><rect x="1314" y="231" width="1" height="1" fill="#3cb371"/><rect x="1318" y="213" width="1" height="20" fill="#000"/><rect x="1317" y="215" width="3" height="16" fill="#000"/><rect x="1318" y="216" width="1" height="14" fill="#3cb371"/><rect x="1322" y="213" width="1" height="9" fill="#000"/><rect x="1321" y="214" width="3" height="5" fill="#000"/><rect x="1322" y="215" width="1" height="3" fill="#3cb371"/><rect x="1326" y="201" width="1" height="15" fill="#000"/><rect x="1325" y="202" width="3" height="12" fill="#000"/><rect x="1326" y="203" width="1" height="10" fill="#3cb371"/><rect x="1330" y="189" width="1" height="14" fill="#000"/><rect x="1329" y="194" width="3" height="7" fill="#000"/><rect x="1330" y="195" width="1" height="5" fill="#3cb371"/><rect x="1334" y="197" width="1" height="12" fill="#000"/><rect x="1333" y="198" width="3" height="10" fill="#000"/><rect x="1334" y="199" width="1" height="8" fill="#f25555"/><rect x="1338" y="194" width="1" height="13" fill="#000"/><rect x="1337" y="199" width="3" height="5" fill="#000"/><rect x="1338" y="200" width="1" height="3" fill="#3cb371"/><rect x="1342" y="200" width="1" height="30" fill="#000"/><rect x="1341" y="201" width="3" height="26" fill="#000"/><rect x="1342" y="202" width="1" height="24" fill="#f25555"/><rect x="1346" y="212" width="1" height="15" fill="#000"/><rect x="1345" y="224" width="3" height="2" fill="#000"/><rect x="1350" y="219" width="1" height="10" fill="#000"/><rect x="1349" y="222" width="3" height="3" fill="#000"/><rect x="1350" y="223" width="1" height="1" fill="#f25555"/><rect x="1354" y="222" width="1" height="10" fill="#000"/><rect x="1353" y="225" width="3" height="3" fill="#000"/><rect x="1354" y="226" width="1" height="1" fill="#f25555"/><rect x="1358" y="226" width="1" height="10" fill="#000"/><rect x="1357" y="232" width="3" height="4" fill="#000"/><rect x="1358" y="233" width="1" height="2" fill="#f25555"/><rect x="1362" y="235" width="1" height="8" fill="#000"/><rect x="1361" y="236" width="3" height="2" fill="#000"/><rect x="1366" y="228" width="1" height="14" fill="#000"/><rect x="1365" y="234" width="3" height="2" fill="#000"/><rect x="1370" y="231" width="1" height="10" fill="#000"/><rect x="1369" y="232" width="3" height="4" fill="#000"/><rect x="1370" y="233" width="1" height="2" fill="#3cb371"/><rect x="1374" y="229" width="1" height="15" fill="#000"/><rect x="1373" y="234" width="3" height="7" fill="#000"/><rect x="1374" y="235" width="1" height="5" fill="#f25555"/><rect x="1378" y="244" width="1" height="19" fill="#000"/><rect x="1377" y="246" width="3" height="7" fill="#000"/><rect x="1378" y="247" width="1" height="5" fill="#f25555"/><rect x="1382" y="249" width="1" height="27" fill="#000"/><rect x="1381" y="249" width="3" height="24" fill="#000"/><rect x="1382" y="250" width="1" height="22" fill="#f25555"/><rect x="1386" y="268" width="1" height="10" fill="#000"/><rect x="1385" y="269" width="3" height="5" fill="#000"/><rect x="1386" y="270" width="1" height="3" fill="#3cb371"/><rect x="1390" y="251" width="1" height="14" fill="#000"/><rect x="1389" y="262" width="3" height="3" fill="#000"/><rect x="1390" y="263" width="1" height="1" fill="#f25555"/><rect x="1394" y="251" width="1" height="16" fill="#000"/><rect x="1393" y="260" width="3" height="7" fill="#000"/><rect x="1394" y="261" width="1" height="5" fill="#3cb371"/><rect x="1398" y="268" width="1" height="16" fill="#000"/><rect x="1397" y="268" width="3" height="11" fill="#000"/><rect x="1398" y="269" width="1" height="9" fill="#3cb371"/><rect x="1402" y="275" width="1" height="22" fill="#000"/><rect x="1401" y="282" width="3" height="15" fill="#000"/><rect x="1402" y="283" width="1" height="13" fill="#f25555"/><rect x="1406" y="278" width="1" height="18" fill="#000"/><rect x="1405" y="284" width="3" height="11" fill="#000"/><rect x="1406" y="285" width="1" height="9" fill="#3cb371"/><rect x="1410" y="273" width="1" height="10" fill="#000"/><rect x="1409" y="277" width="3" height="4" fill="#000"/><rect x="1410" y="278" width="1" height="2" fill="#f25555"/><rect x="1414" y="278" width="1" height="17" fill="#000"/><rect x="1413" y="281" width="3" height="12" fill="#000"/><rect x="1414" y="282" width="1" height="10" fill="#f25555"/><rect x="1418" y="283" width="1" height="15" fill="#000"/><rect x="1417" y="288" width="3" height="10" fill="#000"/><rect x="1418" y="289" width="1" height="8" fill="#3cb371"/><rect x="1422" y="283" width="1" height="18" fill="#000"/><rect x="1421" y="284" width="3" height="13" fill="#000"/><rect x="1422" y="285" width="1" height="11" fill="#3cb371"/><rect x="1426" y="261" width="1" height="16" fill="#000"/><rect x="1425" y="266" width="3" height="11" fill="#000"/><rect x="1426" y="267" width="1" height="9" fill="#3cb371"/><rect x="1430" y="258" width="1" height="12" fill="#000"/><rect x="1429" y="258" width="3" height="8" fill="#000"/><rect x="1430" y="259" width="1" height="6" fill="#f25555"/><rect x="1434" y="262" width="1" height="9" fill="#000"/><rect x="1433" y="263" width="3" height="8" fill="#000"/><rect x="1434" y="264" width="1" height="6" fill="#f25555"/><rect x="1438" y="271" width="1" height="8" fill="#000"/><rect x="1437" y="273" width="3" height="5" fill="#000"/><rect x="1438" y="274" width="1" height="3" fill="#f25555"/><rect x="1442" y="271" width="1" height="10" fill="#000"/><rect x="1441" y="275" width="3" height="4" fill="#000"/><rect x="1442" y="276" width="1" height="2" fill="#3cb371"/><rect x="1446" y="274" width="1" height="9" fill="#000"/><rect x="1445" y="279" width="3" height="3" fill="#000"/><rect x="1446" y="280" width="1" height="1" fill="#f25555"/><rect x="1450" y="267" width="1" height="12" fill="#000"/><rect x="1449" y="274" width="3" height="5" fill="#000"/><rect x="1450" y="275" width="1" height="3" fill="#f25555"/><rect x="1454" y="278" width="1" height="15" fill="#000"/><rect x="1453" y="282" width="3" height="9" fill="#000"/><rect x="1454" y="283" width="1" height="7" fill="#f25555"/><rect x="1458" y="278" width="1" height="15" fill="#000"/><rect x="1457" y="283" width="3" height="8" fill="#000"/><rect x="1458" y="284" width="1" height="6" fill="#3cb371"/><rect x="1462" y="280" width="1" height="11" fill="#000"/><rect x="1461" y="287" width="3" height="2" fill="#000"/><rect x="1466" y="280" width="1" height="10" fill="#000"/><rect x="1465" y="284" width="3" height="5" fill="#000"/><rect x="1466" y="285" width="1" height="3" fill="#f25555"/><rect x="1470" y="281" width="1" height="8" fill="#000"/><rect x="1469" y="286" width="3" height="2" fill="#000"/><rect x="1474" y="279" width="1" height="17" fill="#000"/><rect x="1473" y="280" width="3" height="10" fill="#000"/><rect x="1474" y="281" width="1" height="8" fill="#f25555"/><rect x="1478" y="281" width="1" height="6" fill="#000"/><rect x="1477" y="284" width="3" height="2" fill="#000"/><rect x="1482" y="274" width="1" height="14" fill="#000"/><rect x="1481" y="274" width="3" height="14" fill="#000"/><rect x="1482" y="275" width="1" height="12" fill="#3cb371"/><rect x="1486" y="275" width="1" height="8" fill="#000"/><rect x="1485" y="276" width="3" height="3" fill="#000"/><rect x="1486" y="277" width="1" height="1" fill="#3cb371"/><rect x="1490" y="270" width="1" height="11" fill="#000"/><rect x="1489" y="273" width="3" height="5" fill="#000"/><rect x="1490" y="274" width="1" height="3" fill="#f25555"/><rect x="1494" y="268" width="1" height="12" fill="#000"/><rect x="1493" y="276" width="3" height="2" fill="#000"/><rect x="1498" y="263" width="1" height="17" fill="#000"/><rect x="1497" y="266" width="3" height="12" fill="#000"/><rect x="1498" y="267" width="1" height="10" fill="#f25555"/><rect x="1502" y="261" width="1" height="19" fill="#000"/><rect x="1501" y="264" width="3" height="16" fill="#000"/><rect x="1502" y="265" width="1" height="14" fill="#3cb371"/><rect x="1506" y="259" width="1" height="22" fill="#000"/><rect x="1505" y="264" width="3" height="15" fill="#000"/><rect x="1506" y="265" width="1" height="13" fill="#f25555"/><rect x="1510" y="263" width="1" height="23" fill="#000"/><rect x="1509" y="266" width="3" height="13" fill="#000"/><rect x="1510" y="267" width="1" height="11" fill="#3cb371"/><rect x="1514" y="261" width="1" height="8" fill="#000"/><rect x="1513" y="264" width="3" height="5" fill="#000"/><rect x="1514" y="265" width="1" height="3" fill="#f25555"/><rect x="1518" y="270" width="1" height="11" fill="#000"/><rect x="1517" y="270" width="3" height="7" fill="#000"/><rect x="1518" y="271" width="1" height="5" fill="#f25555"/><rect x="1522" y="275" width="1" height="11" fill="#000"/><rect x="1521" y="277" width="3" height="5" fill="#000"/><rect x="1522" y="278" width="1" height="3" fill="#f25555"/><rect x="1526" y="269" width="1" height="9" fill="#000"/><rect x="1525" y="272" width="3" height="3" fill="#000"/><rect x="1526" y="273" width="1" height="1" fill="#3cb371"/><rect x="1530" y="249" width="1" height="14" fill="#000"/><rect x="1529" y="257" width="3" height="5" fill="#000"/><rect x="1530" y="258" width="1" height="3" fill="#3cb371"/><rect x="1534" y="251" width="1" height="19" fill="#000"/><rect x="1533" y="258" width="3" height="12" fill="#000"/><rect x="1534" y="259" width="1" height="10" fill="#f25555"/><rect x="1538" y="265" width="1" height="15" fill="#000"/><rect x="1537" y="266" width="3" height="12" fill="#000"/><rect x="1538" y="267" width="1" height="10" fill="#f25555"/><rect x="1542" y="264" width="1" height="16" fill="#000"/><rect x="1541" y="267" width="3" height="10" fill="#000"/><rect x="1542" y="268" width="1" height="8" fill="#3cb371"/><rect x="1546" y="264" width="1" height="9" fill="#000"/><rect x="1545" y="266" width="3" height="2" fill="#000"/><polyline points="251.0,443.0 282.0,441.6 330.0,437.0 366.0,433.0 400.0,431.0 425.0,429.0 450.0,426.2 475.0,423.0 500.0,421.0 525.0,419.4 550.0,417.5 575.0,415.0 600.0,411.5 625.0,407.5 640.0,404.0 664.4,400.2 706.8,392.9 744.6,386.5 790.4,380.0 824.8,373.9 859.2,367.0 878.6,363.1 916.5,357.8 957.7,353.9 987.5,351.4 1019.6,348.2 1042.5,342.2 1060.8,334.9 1070.0,332.6 1082.5,326.9 1107.5,318.8 1122.5,315.6 1140.0,308.8 1157.5,303.0 1172.5,298.5 1195.0,294.0 1207.5,291.2 1226.2,286.9 1245.0,283.5 1262.5,281.9 1281.2,279.8 1300.0,275.6 1325.0,269.0 1350.0,263.0 1370.0,259.4 1387.5,258.0 1407.5,256.9 1437.5,255.9 1466.7,256.0 1467.5,254.6 1494.0,254.6 1495.8,253.8 1515.0,253.8 1515.4,252.5 1534.0,252.5 1535.0,251.8 1546.7,251.8" fill="none" stroke="#ff0000" stroke-width="2" stroke-linejoin="round"/><polyline points="251.0,399.0 254.0,404.0 258.0,409.0 262.5,414.5 266.0,415.5 278.0,415.5 283.0,418.0 290.0,421.0 297.0,423.8 310.0,424.0 338.0,424.0 345.0,422.5 357.0,422.5 366.0,425.7 375.0,426.0 385.0,430.0 395.0,432.5 400.0,432.8 412.5,433.8 418.8,435.0 431.0,435.0 438.8,433.0 447.5,427.5 453.8,424.4 465.0,419.4 475.0,415.0 486.0,414.0 496.0,411.6 508.8,411.2 518.8,412.5 527.5,414.0 535.0,413.8 550.0,411.5 560.0,408.0 570.0,404.4 585.0,394.4 597.5,383.0 610.0,376.2 622.5,367.5 638.8,357.2 655.0,349.4 672.5,342.5 687.5,337.5 706.2,334.4 720.0,331.2 738.8,328.8 747.5,325.0 772.5,324.8 785.0,321.9 800.0,320.0 808.0,315.0 840.0,297.5 863.8,288.8 875.0,287.5 902.5,280.6 920.0,272.5 932.5,269.8 946.2,268.8 948.0,267.8 965.0,268.0 982.5,269.0 997.5,269.8 1000.0,268.8 1015.0,268.5 1020.0,268.0 1031.0,267.8 1045.0,265.6 1052.5,264.4 1070.0,255.6 1086.2,244.4 1097.5,235.6 1106.2,227.2 1115.0,224.0 1126.2,220.6 1145.0,211.9 1155.0,206.2 1160.0,205.0 1168.8,204.4 1175.0,205.6 1186.2,211.2 1193.8,216.2 1198.8,217.2 1207.5,221.2 1218.8,231.5 1232.5,235.0 1242.5,236.0 1250.0,240.6 1258.8,245.6 1268.8,249.0 1275.0,250.2 1297.5,250.0 1306.2,248.5 1322.5,244.0 1340.0,237.2 1348.8,235.6 1362.5,235.0 1375.0,235.0 1387.5,240.0 1393.8,240.0 1406.2,245.0 1422.5,251.5 1431.2,252.2 1445.0,256.2 1456.7,259.2 1466.7,261.7 1475.0,263.5 1483.3,264.8 1491.7,265.8 1515.0,266.0 1523.3,268.0 1530.8,268.0 1534.0,267.3 1546.7,267.7" fill="none" stroke="#0000ff" stroke-width="2" stroke-linejoin="round"/><polyline points="251.0,661.8 254.0,662.8 258.7,654.3 262.6,652.0 267.0,646.2 271.0,645.8 274.0,642.8 278.0,644.0 282.0,650.0 286.7,647.4 290.8,648.5 294.7,645.8 299.3,646.7 306.0,642.8 310.0,644.6 314.0,644.0 323.3,644.0 326.8,642.4 330.2,644.6 336.0,644.4 339.0,642.4 341.7,644.0 352.0,644.0 355.4,645.8 358.9,646.2 366.9,650.4 372.6,647.9 378.3,650.8 381.8,650.8 387.0,647.9 393.2,648.5 401.2,646.7 407.0,647.9 410.4,645.0 413.9,646.9 419.6,646.2 423.0,647.9 427.6,644.4 431.0,644.0 439.0,634.8 444.8,633.0 452.8,633.0 455.0,631.8 458.5,637.8 462.0,637.8 465.4,634.8 470.0,634.8 474.6,637.0 479.2,644.0 492.9,644.0 497.5,642.8 502.0,649.0 506.7,645.8 511.2,648.5 514.7,649.0 521.6,653.0 525.0,652.4 530.7,649.7 534.6,643.3 546.8,642.8 550.2,638.2 554.8,639.4 558.2,633.6 562.1,637.0 566.2,633.6 570.4,637.0 574.3,632.5 578.2,629.8 585.7,629.8 592.6,626.8 597.2,627.9 602.9,630.9 607.5,630.7 612.0,628.6 615.5,629.0 622.4,635.2 625.8,630.7 631.5,633.0 635.0,633.0 638.4,630.9 646.5,641.2 651.0,637.0 653.8,637.0 658.4,641.2 664.8,638.9 669.4,639.8 683.0,639.8 690.0,644.4 701.5,644.0 706.0,646.7 710.2,635.5 715.2,645.0 722.0,647.0 726.0,642.8 730.8,648.0 737.0,644.0 742.2,633.6 746.8,645.8 754.2,647.9 763.3,647.9 766.8,650.0 776.0,642.8 781.2,642.8 786.2,647.4 790.8,644.0 795.4,644.4 798.9,640.5 802.3,638.9 808.0,633.6 812.6,631.8 818.3,630.9 822.9,634.8 827.0,634.8 830.2,637.0 834.4,633.6 838.5,638.9 842.4,638.9 847.0,641.0 852.7,637.8 861.9,637.8 866.5,643.3 874.5,648.0 879.0,640.5 882.0,639.8 886.6,647.4 891.7,642.4 896.2,641.0 902.0,641.0 905.9,636.6 910.0,638.9 913.4,638.9 918.0,637.8 928.3,645.8 935.2,646.2 939.3,648.0 946.2,644.0 949.0,644.6 954.0,650.8 961.6,648.5 969.6,653.0 976.5,649.7 981.0,648.5 984.5,650.0 988.0,649.7 995.2,649.0 998.2,644.0 1002.8,645.0 1006.2,644.0 1010.8,645.0 1018.9,645.0 1022.3,646.2 1029.2,641.7 1034.9,641.7 1041.8,637.8 1044.0,640.5 1046.4,648.5 1049.8,647.0 1054.4,634.3 1058.5,632.5 1062.4,628.6 1066.3,634.0 1070.4,634.0 1075.0,629.8 1079.6,629.8 1083.0,630.9 1089.9,627.9 1093.3,629.0 1097.9,629.0 1102.5,624.5 1107.0,633.6 1110.5,645.0 1114.0,641.7 1117.4,643.5 1122.0,644.4 1126.6,640.5 1130.0,639.8 1146.0,639.8 1148.3,638.9 1155.2,638.9 1158.6,641.7 1163.2,647.9 1170.0,648.5 1174.7,656.6 1179.3,661.6 1183.9,662.8 1194.2,662.8 1198.3,654.7 1202.2,654.7 1206.8,660.0 1211.4,662.8 1218.2,662.8 1222.4,652.4 1226.2,652.0 1234.3,647.9 1242.3,647.9 1246.9,654.3 1251.0,657.7 1254.9,657.7 1258.3,655.9 1262.5,648.5 1267.0,650.8 1278.5,646.2 1283.0,647.0 1287.0,642.8 1290.4,642.4 1299.6,638.2 1306.5,637.8 1308.8,636.6 1314.5,637.8 1319.8,633.6 1324.8,633.2 1330.5,630.7 1334.0,634.8 1338.0,634.8 1342.7,642.8 1351.1,643.3 1359.2,646.7 1364.9,646.7 1370.6,645.6 1374.5,649.7 1377.5,651.5 1382.0,657.7 1385.5,657.7 1391.2,653.6 1397.0,653.8 1402.7,661.8 1406.1,657.2 1409.6,655.9 1414.6,658.2 1422.2,654.3 1427.5,646.2 1430.2,647.9 1433.6,647.9 1438.2,650.8 1444.0,650.8 1446.2,652.0 1450.8,652.0 1454.3,655.4 1457.7,653.0 1473.8,653.0 1478.3,652.0 1483.4,646.2 1487.5,646.2 1489.8,647.0 1498.5,647.0 1502.4,640.5 1505.8,647.4 1509.3,642.8 1513.9,642.8 1519.6,648.5 1523.0,648.5 1529.9,639.8 1534.5,645.0 1538.4,647.4 1542.5,644.0 1546.0,644.0" fill="none" stroke="#0000ff" stroke-width="2" stroke-linejoin="round"/><path d="M1474.500 290h8l-4-4.500z M1477 290h3v3h-3z" fill="#1e6fd8"/><path d="M1478 287L1492 271" stroke="#3a8fe8" stroke-width="1" stroke-dasharray="2 2"/><path d="M1499 256.500h8l-4 3.500z M1501.500 254h3v3h-3z" fill="#e2501f"/></svg>
<div style="left:1876px;top:119px;width:3px;height:1px;background:#000;"></div>
<div class="t" style="left:1881.00px;top:112.75px;height:12px;line-height:12px;font-size:10px;color:#000;letter-spacing:-0.606px;">88.00</div>
<div style="left:1876px;top:151px;width:3px;height:1px;background:#000;"></div>
<div class="t" style="left:1881.00px;top:145.15px;height:12px;line-height:12px;font-size:10px;color:#000;letter-spacing:-0.606px;">85.00</div>
<div style="left:1876px;top:184px;width:3px;height:1px;background:#000;"></div>
<div class="t" style="left:1881.00px;top:177.55px;height:12px;line-height:12px;font-size:10px;color:#000;letter-spacing:-0.606px;">82.00</div>
<div style="left:1876px;top:216px;width:3px;height:1px;background:#000;"></div>
<div class="t" style="left:1881.00px;top:209.95px;height:12px;line-height:12px;font-size:10px;color:#000;letter-spacing:-0.606px;">79.00</div>
<div style="left:1876px;top:248px;width:3px;height:1px;background:#000;"></div>
<div class="t" style="left:1881.00px;top:242.35px;height:12px;line-height:12px;font-size:10px;color:#000;letter-spacing:-0.606px;">76.00</div>
<div style="left:1876px;top:281px;width:3px;height:1px;background:#000;"></div>
<div class="t" style="left:1881.00px;top:274.75px;height:12px;line-height:12px;font-size:10px;color:#000;letter-spacing:-0.606px;">73.00</div>
<div style="left:1876px;top:313px;width:3px;height:1px;background:#000;"></div>
<div class="t" style="left:1881.00px;top:307.15px;height:12px;line-height:12px;font-size:10px;color:#000;letter-spacing:-0.606px;">70.00</div>
<div style="left:1876px;top:346px;width:3px;height:1px;background:#000;"></div>
<div class="t" style="left:1881.00px;top:339.55px;height:12px;line-height:12px;font-size:10px;color:#000;letter-spacing:-0.606px;">67.00</div>
<div style="left:1876px;top:378px;width:3px;height:1px;background:#000;"></div>
<div class="t" style="left:1881.00px;top:371.95px;height:12px;line-height:12px;font-size:10px;color:#000;letter-spacing:-0.606px;">64.00</div>
<div style="left:1876px;top:410px;width:3px;height:1px;background:#000;"></div>
<div class="t" style="left:1881.00px;top:404.35px;height:12px;line-height:12px;font-size:10px;color:#000;letter-spacing:-0.606px;">61.00</div>
<div style="left:1876px;top:443px;width:3px;height:1px;background:#000;"></div>
<div class="t" style="left:1881.00px;top:436.75px;height:12px;line-height:12px;font-size:10px;color:#000;letter-spacing:-0.606px;">58.00</div>
<div style="left:1876px;top:475px;width:3px;height:1px;background:#000;"></div>
<div class="t" style="left:1881.00px;top:469.15px;height:12px;line-height:12px;font-size:10px;color:#000;letter-spacing:-0.606px;">55.00</div>
<div style="left:1876px;top:508px;width:3px;height:1px;background:#000;"></div>
<div class="t" style="left:1881.00px;top:501.55px;height:12px;line-height:12px;font-size:10px;color:#000;letter-spacing:-0.606px;">52.00</div>
<div style="left:1876px;top:540px;width:3px;height:1px;background:#000;"></div>
<div class="t" style="left:1881.00px;top:533.95px;height:12px;line-height:12px;font-size:10px;color:#000;letter-spacing:-0.606px;">49.00</div>
<div style="left:1876px;top:572px;width:3px;height:1px;background:#000;"></div>
<div class="t" style="left:1881.00px;top:566.35px;height:12px;line-height:12px;font-size:10px;color:#000;letter-spacing:-0.606px;">46.00</div>
<div style="left:1877px;top:261px;width:30px;height:11px;background:#22a294;"></div>
<div class="t" style="left:1881.00px;top:260.50px;height:12px;line-height:12px;font-size:10px;color:#fff;letter-spacing:-0.606px;">74.23</div>
<div style="left:1876px;top:607px;width:5px;height:1px;background:#000;"></div>
<div style="left:1876px;top:645px;width:3px;height:1px;background:#000;"></div>
<div style="left:1876px;top:684px;width:5px;height:1px;background:#000;"></div>
<div class="t" style="left:1881.50px;top:605.50px;height:12px;line-height:12px;font-size:10px;color:#000;letter-spacing:-0.599px;">100.00</div>
<div class="t" style="left:1881.00px;top:639.50px;height:12px;line-height:12px;font-size:10px;color:#000;letter-spacing:-0.606px;">50.00</div>
<div class="t" style="left:1881.00px;top:673.50px;height:12px;line-height:12px;font-size:10px;color:#000;letter-spacing:-0.617px;">0.00</div>
<div class="t" style="left:250.00px;top:688.50px;height:12px;line-height:12px;font-size:10px;color:#000;letter-spacing:-0.474px;">20 Mar 2020</div>
<div style="left:314px;top:686px;width:1px;height:3px;background:#000;"></div>
<div class="t" style="left:315.00px;top:688.50px;height:12px;line-height:12px;font-size:10px;color:#000;letter-spacing:-0.456px;">14 Apr 2020</div>
<div style="left:378px;top:686px;width:1px;height:3px;background:#000;"></div>
<div class="t" style="left:379.00px;top:688.50px;height:12px;line-height:12px;font-size:10px;color:#000;letter-spacing:-0.486px;">6 May 2020</div>
<div style="left:442px;top:686px;width:1px;height:3px;background:#000;"></div>
<div class="t" style="left:443.00px;top:688.50px;height:12px;line-height:12px;font-size:10px;color:#000;letter-spacing:-0.489px;">29 May 2020</div>
<div style="left:506px;top:686px;width:1px;height:3px;background:#000;"></div>
<div class="t" style="left:507.00px;top:688.50px;height:12px;line-height:12px;font-size:10px;color:#000;letter-spacing:-0.465px;">22 Jun 2020</div>
<div style="left:570px;top:686px;width:1px;height:3px;background:#000;"></div>
<div class="t" style="left:571.00px;top:688.50px;height:12px;line-height:12px;font-size:10px;color:#000;letter-spacing:-0.437px;">15 Jul 2020</div>
<div style="left:634px;top:686px;width:1px;height:3px;background:#000;"></div>
<div class="t" style="left:635.00px;top:688.50px;height:12px;line-height:12px;font-size:10px;color:#000;letter-spacing:-0.471px;">6 Aug 2020</div>
<div style="left:698px;top:686px;width:1px;height:3px;background:#000;"></div>
<div class="t" style="left:699.00px;top:688.50px;height:12px;line-height:12px;font-size:10px;color:#000;letter-spacing:-0.475px;">28 Aug 2020</div>
<div style="left:762px;top:686px;width:1px;height:3px;background:#000;"></div>
<div class="t" style="left:763.00px;top:688.50px;height:12px;line-height:12px;font-size:10px;color:#000;letter-spacing:-0.479px;">22 Sep 2020</div>
<div style="left:826px;top:686px;width:1px;height:3px;background:#000;"></div>
<div class="t" style="left:827.00px;top:688.50px;height:12px;line-height:12px;font-size:10px;color:#000;letter-spacing:-0.461px;">14 Oct 2020</div>
<div style="left:890px;top:686px;width:1px;height:3px;background:#000;"></div>
<div class="t" style="left:891.00px;top:688.50px;height:12px;line-height:12px;font-size:10px;color:#000;letter-spacing:-0.475px;">5 Nov 2020</div>
<div style="left:954px;top:686px;width:1px;height:3px;background:#000;"></div>
<div class="t" style="left:955.00px;top:688.50px;height:12px;line-height:12px;font-size:10px;color:#000;letter-spacing:-0.479px;">30 Nov 2020</div>
<div style="left:1018px;top:686px;width:1px;height:3px;background:#000;"></div>
<div class="t" style="left:1019.00px;top:688.50px;height:12px;line-height:12px;font-size:10px;color:#000;letter-spacing:-0.479px;">22 Dec 2020</div>
<div style="left:1082px;top:686px;width:1px;height:3px;background:#000;"></div>
<div class="t" style="left:1083.00px;top:688.50px;height:12px;line-height:12px;font-size:10px;color:#000;letter-spacing:-0.465px;">15 Jan 2021</div>
<div style="left:1146px;top:686px;width:1px;height:3px;background:#000;"></div>
<div class="t" style="left:1147.00px;top:688.50px;height:12px;line-height:12px;font-size:10px;color:#000;letter-spacing:-0.471px;">9 Feb 2021</div>
<div style="left:1210px;top:686px;width:1px;height:3px;background:#000;"></div>
<div class="t" style="left:1211.00px;top:688.50px;height:12px;line-height:12px;font-size:10px;color:#000;letter-spacing:-0.470px;">4 Mar 2021</div>
<div style="left:1274px;top:686px;width:1px;height:3px;background:#000;"></div>
<div class="t" style="left:1275.00px;top:688.50px;height:12px;line-height:12px;font-size:10px;color:#000;letter-spacing:-0.474px;">26 Mar 2021</div>
<div style="left:1338px;top:686px;width:1px;height:3px;background:#000;"></div>
<div class="t" style="left:1339.00px;top:688.50px;height:12px;line-height:12px;font-size:10px;color:#000;letter-spacing:-0.456px;">20 Apr 2021</div>
<div style="left:1402px;top:686px;width:1px;height:3px;background:#000;"></div>
<div class="t" style="left:1403.00px;top:688.50px;height:12px;line-height:12px;font-size:10px;color:#000;letter-spacing:-0.489px;">12 May 2021</div>
<div style="left:1466px;top:686px;width:1px;height:3px;background:#000;"></div>
<div class="t" style="left:1467.00px;top:688.50px;height:12px;line-height:12px;font-size:10px;color:#000;letter-spacing:-0.460px;">4 Jun 2021</div>
<div style="left:1530px;top:686px;width:1px;height:3px;background:#000;"></div>
<div class="t" style="left:1531.00px;top:688.50px;height:12px;line-height:12px;font-size:10px;color:#000;letter-spacing:-0.465px;">28 Jun 2021</div>
<svg style="left:254px;top:113px" width="16" height="13" viewBox="0 0 16 13" ><rect x="0.500" y="0.500" width="14" height="12" rx="1.500" fill="#fff" stroke="#777"/><rect x="0.500" y="0.500" width="14" height="2" fill="#5a5af0"/><path d="M2 4.500h5M2 6.500h5M2 8.500h5M2 10.500h5" stroke="#e06050"/><path d="M8 4.500h5.500M8 6.500h5.500M8 8.500h5.500M8 10.500h5.500" stroke="#6a6af0"/></svg>
<svg style="left:271px;top:113px" width="16" height="13" viewBox="0 0 16 13" ><path d="M1 1h3.500v7h2.500v3.500h-6z" fill="#2b3fe0" stroke="#1a2aa0" stroke-width=".6"/><path d="M9 11.500v-6h2.500v-4.500h3.500v10.500z" fill="#d03030" stroke="#902020" stroke-width=".6"/><path d="M5.500 1.500h4M5.500 3.500h4" stroke="#888"/></svg>
<div class="t" style="left:292.00px;top:114.00px;height:12px;line-height:12px;font-size:10px;color:#000;letter-spacing:-0.122px;">#NEE-T, Daily:  NextEra Energy Inc CFD</div>
<div class="t" style="left:254.50px;top:128.50px;height:12px;line-height:12px;font-size:10px;color:#000;letter-spacing:-0.198px;">Myfxbook EA Version 1.65</div>
<div class="t" style="left:254.50px;top:139.50px;height:12px;line-height:12px;font-size:10px;color:#000;letter-spacing:-0.397px;">Last Publish: 2021.07.03 15:41</div>
<div class="t" style="left:254.50px;top:150.50px;height:12px;line-height:12px;font-size:10px;color:#000;letter-spacing:-0.394px;">Statement uploaded successfully</div>
<div class="t" style="left:254.00px;top:609.50px;height:12px;line-height:12px;font-size:10px;color:#000;letter-spacing:-0.328px;">RSI(14) 52.72</div>
<div class="t" style="left:1813.00px;top:114.50px;height:12px;line-height:12px;font-size:10px;color:#000;letter-spacing:-0.225px;">Myfxbook</div>
<svg style="left:1857px;top:112px" width="18" height="16" viewBox="0 0 18 16" ><path d="M1 5l7-3 7 3-7 3z" fill="#4a4d55"/><path d="M4 6.500v3c2.500 1.500 5.500 1.500 8 0v-3" fill="#8a8f98"/><circle cx="7" cy="11" r="3.500" fill="#5aa0e8"/><rect x="8.500" y="7.500" width="7" height="7" rx="1.500" fill="#e83a1e"/><rect x="10.500" y="9.500" width="3" height="3" fill="#fff"/></svg>
<div style="left:248px;top:708px;width:1672px;height:1px;background:#000;"></div>
<div style="left:248px;top:709px;width:1672px;height:1px;background:#fff;"></div>
<div style="left:246px;top:727px;width:1674px;height:1px;background:#dcdcdc;"></div>
<div style="left:420px;top:708px;width:93px;height:20px;background:#fff;border:1px solid #000;border-top:none;box-shadow:1px 1px 0 #808080"></div>
<div class="t" style="left:261.00px;top:710.50px;height:16px;line-height:16px;font-size:12px;color:#707070;letter-spacing:-0.134px;">QCOM,Daily</div>
<div style="left:338px;top:711px;width:1px;height:14px;background:#707070;"></div>
<div class="t" style="left:348.00px;top:710.50px;height:16px;line-height:16px;font-size:12px;color:#707070;letter-spacing:-0.122px;">#JD-T,Daily</div>
<div class="t" style="left:432.00px;top:709.50px;height:16px;line-height:16px;font-size:12px;color:#000;letter-spacing:-0.279px;">#NEE-T,Daily</div>
<div class="t" style="left:523.00px;top:710.50px;height:16px;line-height:16px;font-size:12px;color:#707070;letter-spacing:-0.112px;">#NKE-T,Daily</div>
<svg style="left:1880px;top:714px" width="8" height="8" viewBox="0 0 8 8" ><path d="M5 0v8L1 4z" fill="#a0a0a0"/></svg>
<svg style="left:1902px;top:714px" width="8" height="8" viewBox="0 0 8 8" ><path d="M2 0v8l4-4z" fill="#a0a0a0"/></svg>
<div style="left:15px;top:732px;width:1901px;height:259px;background:#fff;"></div>
<div style="left:15px;top:732px;width:1901px;height:1px;background:#a0a0a0;"></div>
<div style="left:15px;top:732px;width:1px;height:259px;background:#a0a0a0;"></div>
<svg style="left:3.5px;top:734.0px" width="7.0" height="7.0" viewBox="0 0 7.0 7.0" ><path d="M1 1l5.0 5.0M6.0 1l-5.0 5.0" stroke="#000" stroke-width="1.8"/></svg>
<div style="left:1px;top:746px;width:13px;height:266px;background:linear-gradient(to bottom,#b3c7df,#d3e1f0);"></div>
<div class="t" style="left:-13px;top:984px;width:40px;height:14px;line-height:14px;font-size:12px;color:#000;transform:rotate(-90deg);transform-origin:center;letter-spacing:-0.1px">Toolbox</div>
<div class="t" style="left:22.00px;top:737.00px;height:16px;line-height:16px;font-size:12px;color:#000;letter-spacing:-0.055px;">Time</div>
<div class="t" style="left:268.00px;top:737.00px;height:16px;line-height:16px;font-size:12px;color:#000;letter-spacing:-0.002px;">Symbol</div>
<div class="t" style="left:383.00px;top:737.00px;height:16px;line-height:16px;font-size:12px;color:#000;letter-spacing:0.240px;">Ticket</div>
<div class="t" style="left:484.00px;top:737.00px;height:16px;line-height:16px;font-size:12px;color:#000;letter-spacing:-0.254px;">Type</div>
<div class="t" style="left:621.00px;top:737.00px;height:16px;line-height:16px;font-size:12px;color:#000;letter-spacing:0.162px;">Volume</div>
<div class="t" style="left:789.00px;top:737.00px;height:16px;line-height:16px;font-size:12px;color:#000;letter-spacing:-0.068px;">Price</div>
<div class="t" style="left:947.00px;top:737.00px;height:16px;line-height:16px;font-size:12px;color:#000;letter-spacing:-0.336px;">S / L</div>
<div class="t" style="left:1100.00px;top:737.00px;height:16px;line-height:16px;font-size:12px;color:#000;letter-spacing:-0.224px;">T / P</div>
<div class="t" style="left:1238.00px;top:737.00px;height:16px;line-height:16px;font-size:12px;color:#000;letter-spacing:-0.055px;">Time</div>
<div class="t" style="left:1391.00px;top:737.00px;height:16px;line-height:16px;font-size:12px;color:#000;letter-spacing:-0.068px;">Price</div>
<div class="t" style="left:1764.00px;top:737.00px;height:16px;line-height:16px;font-size:12px;color:#000;letter-spacing:0.165px;">Profit</div>
<div class="t" style="left:1852.00px;top:737.00px;height:16px;line-height:16px;font-size:12px;color:#000;letter-spacing:-0.173px;">Change</div>
<svg style="left:62px;top:742px" width="9" height="6" viewBox="0 0 9 6" ><path d="M0 5h8L4 0z" fill="#222"/></svg>
<div style="left:175px;top:734px;width:1px;height:22px;background:#e0e0e0;"></div>
<div style="left:313px;top:734px;width:1px;height:22px;background:#e0e0e0;"></div>
<div style="left:421px;top:734px;width:1px;height:22px;background:#e0e0e0;"></div>
<div style="left:513px;top:734px;width:1px;height:22px;background:#e0e0e0;"></div>
<div style="left:667px;top:734px;width:1px;height:22px;background:#e0e0e0;"></div>
<div style="left:821px;top:734px;width:1px;height:22px;background:#e0e0e0;"></div>
<div style="left:975px;top:734px;width:1px;height:22px;background:#e0e0e0;"></div>
<div style="left:1129px;top:734px;width:1px;height:22px;background:#e0e0e0;"></div>
<div style="left:1269px;top:734px;width:1px;height:22px;background:#e0e0e0;"></div>
<div style="left:1423px;top:734px;width:1px;height:22px;background:#e0e0e0;"></div>
<div style="left:1798px;top:734px;width:1px;height:22px;background:#e0e0e0;"></div>
<div style="left:1898px;top:734px;width:1px;height:22px;background:#e0e0e0;"></div>
<div style="left:16px;top:757px;width:1882px;height:19px;background:#ffffff;"></div>
<div style="left:16px;top:776px;width:1882px;height:1px;background:#d4d4d4;"></div>
<div style="left:175px;top:757px;width:1px;height:20px;background:#d4d4d4;"></div>
<div style="left:313px;top:757px;width:1px;height:20px;background:#d4d4d4;"></div>
<div style="left:421px;top:757px;width:1px;height:20px;background:#d4d4d4;"></div>
<div style="left:513px;top:757px;width:1px;height:20px;background:#d4d4d4;"></div>
<div style="left:667px;top:757px;width:1px;height:20px;background:#d4d4d4;"></div>
<div style="left:821px;top:757px;width:1px;height:20px;background:#d4d4d4;"></div>
<div style="left:975px;top:757px;width:1px;height:20px;background:#d4d4d4;"></div>
<div style="left:1129px;top:757px;width:1px;height:20px;background:#d4d4d4;"></div>
<div style="left:1269px;top:757px;width:1px;height:20px;background:#d4d4d4;"></div>
<div style="left:1423px;top:757px;width:1px;height:20px;background:#d4d4d4;"></div>
<div style="left:1798px;top:757px;width:1px;height:20px;background:#d4d4d4;"></div>
<svg style="left:18px;top:759px" width="13" height="16" viewBox="0 0 13 16" ><path d="M1 2a1.500 1.500 0 0 1 1.500-1.500h7.500a1.500 1.500 0 0 1 1.500 1.500v8.500l-3.500 4h-5.500a1.500 1.500 0 0 1-1.500-1.500z" fill="#c4dcf8" stroke="#2f7fd6" stroke-width="1.200"/><path d="M3.300 4h6M3.300 6.500h6M3.300 9h4" stroke="#fff" stroke-width="1.300"/><path d="M8.300 14.300v-3.500h3.500z" fill="#2f7fd6"/></svg>
<div class="t" style="left:37.00px;top:758.50px;height:16px;line-height:16px;font-size:12px;color:#000;letter-spacing:-0.584px;">2021.06.28 16:40:27</div>
<div class="t" style="left:270.00px;top:758.50px;height:16px;line-height:16px;font-size:12px;color:#000;letter-spacing:0.570px;">#ttwo-t</div>
<div class="t" style="left:365.00px;top:758.50px;height:16px;line-height:16px;font-size:12px;color:#000;letter-spacing:-0.785px;">501278014</div>
<div class="t" style="left:491.00px;top:758.50px;height:16px;line-height:16px;font-size:12px;color:#000;letter-spacing:-0.116px;">buy</div>
<div class="t" style="left:657.33px;top:758.50px;height:16px;line-height:16px;font-size:12px;color:#000;">7</div>
<div class="t" style="left:783.15px;top:758.50px;height:16px;line-height:16px;font-size:12px;color:#000;letter-spacing:-0.309px;">176.66</div>
<div class="t" style="left:937.15px;top:758.50px;height:16px;line-height:16px;font-size:12px;color:#000;letter-spacing:-0.309px;">172.00</div>
<div class="t" style="left:1091.15px;top:758.50px;height:16px;line-height:16px;font-size:12px;color:#000;letter-spacing:-0.309px;">185.00</div>
<div class="t" style="left:1167.00px;top:758.50px;height:16px;line-height:16px;font-size:12px;color:#000;letter-spacing:-0.584px;">2021.06.29 22:16:25</div>
<div class="t" style="left:1385.15px;top:758.50px;height:16px;line-height:16px;font-size:12px;color:#000;letter-spacing:-0.309px;">178.00</div>
<div class="t" style="left:1773.05px;top:758.50px;height:16px;line-height:16px;font-size:12px;color:#0000ff;letter-spacing:-0.351px;">9.38</div>
<div class="t" style="left:1859.95px;top:758.50px;height:16px;line-height:16px;font-size:12px;color:#0000ff;letter-spacing:-0.385px;">0.76 %</div>
<div style="left:16px;top:777px;width:1882px;height:19px;background:#ebebeb;"></div>
<div style="left:16px;top:796px;width:1882px;height:1px;background:#d4d4d4;"></div>
<div style="left:175px;top:777px;width:1px;height:20px;background:#d4d4d4;"></div>
<div style="left:313px;top:777px;width:1px;height:20px;background:#d4d4d4;"></div>
<div style="left:421px;top:777px;width:1px;height:20px;background:#d4d4d4;"></div>
<div style="left:513px;top:777px;width:1px;height:20px;background:#d4d4d4;"></div>
<div style="left:667px;top:777px;width:1px;height:20px;background:#d4d4d4;"></div>
<div style="left:821px;top:777px;width:1px;height:20px;background:#d4d4d4;"></div>
<div style="left:975px;top:777px;width:1px;height:20px;background:#d4d4d4;"></div>
<div style="left:1129px;top:777px;width:1px;height:20px;background:#d4d4d4;"></div>
<div style="left:1269px;top:777px;width:1px;height:20px;background:#d4d4d4;"></div>
<div style="left:1423px;top:777px;width:1px;height:20px;background:#d4d4d4;"></div>
<div style="left:1798px;top:777px;width:1px;height:20px;background:#d4d4d4;"></div>
<svg style="left:18px;top:779px" width="13" height="16" viewBox="0 0 13 16" ><path d="M1 2a1.500 1.500 0 0 1 1.500-1.500h7.500a1.500 1.500 0 0 1 1.500 1.500v8.500l-3.500 4h-5.500a1.500 1.500 0 0 1-1.500-1.500z" fill="#c4dcf8" stroke="#2f7fd6" stroke-width="1.200"/><path d="M3.300 4h6M3.300 6.500h6M3.300 9h4" stroke="#fff" stroke-width="1.300"/><path d="M8.300 14.300v-3.500h3.500z" fill="#2f7fd6"/></svg>
<div class="t" style="left:37.00px;top:778.50px;height:16px;line-height:16px;font-size:12px;color:#000;letter-spacing:-0.538px;">2021.06.30 16:41:11</div>
<div class="t" style="left:263.00px;top:778.50px;height:16px;line-height:16px;font-size:12px;color:#000;letter-spacing:0.522px;">#qcom-t</div>
<div class="t" style="left:365.00px;top:778.50px;height:16px;line-height:16px;font-size:12px;color:#000;letter-spacing:-0.785px;">501284582</div>
<div class="t" style="left:491.00px;top:778.50px;height:16px;line-height:16px;font-size:12px;color:#000;letter-spacing:-0.116px;">buy</div>
<div class="t" style="left:651.60px;top:778.50px;height:16px;line-height:16px;font-size:12px;color:#000;letter-spacing:-0.474px;">10</div>
<div class="t" style="left:783.15px;top:778.50px;height:16px;line-height:16px;font-size:12px;color:#000;letter-spacing:-0.309px;">142.89</div>
<div class="t" style="left:937.15px;top:778.50px;height:16px;line-height:16px;font-size:12px;color:#000;letter-spacing:-0.309px;">141.40</div>
<div class="t" style="left:1091.15px;top:778.50px;height:16px;line-height:16px;font-size:12px;color:#000;letter-spacing:-0.309px;">145.00</div>
<div class="t" style="left:1167.00px;top:778.50px;height:16px;line-height:16px;font-size:12px;color:#000;letter-spacing:-0.584px;">2021.07.01 16:48:50</div>
<div class="t" style="left:1385.15px;top:778.50px;height:16px;line-height:16px;font-size:12px;color:#000;letter-spacing:-0.309px;">142.08</div>
<div class="t" style="left:1768.25px;top:778.50px;height:16px;line-height:16px;font-size:12px;color:#ff0000;letter-spacing:-0.120px;">-8.10</div>
<div class="t" style="left:1855.15px;top:778.50px;height:16px;line-height:16px;font-size:12px;color:#ff0000;letter-spacing:-0.215px;">-0.57 %</div>
<div style="left:16px;top:797px;width:1882px;height:19px;background:#0078d7;"></div>
<div style="left:16px;top:816px;width:1882px;height:1px;background:#0078d7;"></div>
<div style="left:175px;top:797px;width:1px;height:20px;background:#3a8fe0;"></div>
<div style="left:313px;top:797px;width:1px;height:20px;background:#3a8fe0;"></div>
<div style="left:421px;top:797px;width:1px;height:20px;background:#3a8fe0;"></div>
<div style="left:513px;top:797px;width:1px;height:20px;background:#3a8fe0;"></div>
<div style="left:667px;top:797px;width:1px;height:20px;background:#3a8fe0;"></div>
<div style="left:821px;top:797px;width:1px;height:20px;background:#3a8fe0;"></div>
<div style="left:975px;top:797px;width:1px;height:20px;background:#3a8fe0;"></div>
<div style="left:1129px;top:797px;width:1px;height:20px;background:#3a8fe0;"></div>
<div style="left:1269px;top:797px;width:1px;height:20px;background:#3a8fe0;"></div>
<div style="left:1423px;top:797px;width:1px;height:20px;background:#3a8fe0;"></div>
<div style="left:1798px;top:797px;width:1px;height:20px;background:#3a8fe0;"></div>
<svg style="left:18px;top:799px" width="13" height="16" viewBox="0 0 13 16" ><path d="M1 2a1.500 1.500 0 0 1 1.500-1.500h7.500a1.500 1.500 0 0 1 1.500 1.500v8.500l-3.500 4h-5.500a1.500 1.500 0 0 1-1.500-1.500z" fill="#f4f9ff" stroke="#2f7fd6" stroke-width="1.200"/><path d="M3.300 4h6M3.300 6.500h6M3.300 9h4" stroke="#2f7fd6" stroke-width="1.300"/><path d="M8.300 14.300v-3.500h3.500z" fill="#2f7fd6"/></svg>
<div class="t" style="left:37.00px;top:798.50px;height:16px;line-height:16px;font-size:12px;color:#fff;letter-spacing:-0.584px;">2021.06.30 16:46:48</div>
<div class="t" style="left:272.00px;top:798.50px;height:16px;line-height:16px;font-size:12px;color:#fff;letter-spacing:0.187px;">#aapl-t</div>
<div class="t" style="left:365.00px;top:798.50px;height:16px;line-height:16px;font-size:12px;color:#fff;letter-spacing:-0.785px;">501284593</div>
<div class="t" style="left:491.00px;top:798.50px;height:16px;line-height:16px;font-size:12px;color:#fff;letter-spacing:-0.116px;">buy</div>
<div class="t" style="left:651.60px;top:798.50px;height:16px;line-height:16px;font-size:12px;color:#fff;letter-spacing:-0.474px;">10</div>
<div class="t" style="left:783.15px;top:798.50px;height:16px;line-height:16px;font-size:12px;color:#fff;letter-spacing:-0.309px;">136.73</div>
<div class="t" style="left:937.15px;top:798.50px;height:16px;line-height:16px;font-size:12px;color:#fff;letter-spacing:-0.309px;">135.50</div>
<div class="t" style="left:1091.15px;top:798.50px;height:16px;line-height:16px;font-size:12px;color:#fff;letter-spacing:-0.309px;">140.00</div>
<div class="t" style="left:1167.00px;top:798.50px;height:16px;line-height:16px;font-size:12px;color:#fff;letter-spacing:-0.584px;">2021.06.30 16:59:28</div>
<div class="t" style="left:1385.15px;top:798.50px;height:16px;line-height:16px;font-size:12px;color:#fff;letter-spacing:-0.309px;">136.08</div>
<div class="t" style="left:1768.25px;top:798.50px;height:16px;line-height:16px;font-size:12px;color:#fff;letter-spacing:-0.120px;">-6.50</div>
<div class="t" style="left:1855.15px;top:798.50px;height:16px;line-height:16px;font-size:12px;color:#fff;letter-spacing:-0.215px;">-0.48 %</div>
<div style="left:16px;top:817px;width:1882px;height:19px;background:#ebebeb;"></div>
<div style="left:16px;top:836px;width:1882px;height:1px;background:#d4d4d4;"></div>
<div style="left:822px;top:817px;width:153px;height:19px;background:#fca2a2;"></div>
<div style="left:175px;top:817px;width:1px;height:20px;background:#d4d4d4;"></div>
<div style="left:313px;top:817px;width:1px;height:20px;background:#d4d4d4;"></div>
<div style="left:421px;top:817px;width:1px;height:20px;background:#d4d4d4;"></div>
<div style="left:513px;top:817px;width:1px;height:20px;background:#d4d4d4;"></div>
<div style="left:667px;top:817px;width:1px;height:20px;background:#d4d4d4;"></div>
<div style="left:821px;top:817px;width:1px;height:20px;background:#d4d4d4;"></div>
<div style="left:975px;top:817px;width:1px;height:20px;background:#d4d4d4;"></div>
<div style="left:1129px;top:817px;width:1px;height:20px;background:#d4d4d4;"></div>
<div style="left:1269px;top:817px;width:1px;height:20px;background:#d4d4d4;"></div>
<div style="left:1423px;top:817px;width:1px;height:20px;background:#d4d4d4;"></div>
<div style="left:1798px;top:817px;width:1px;height:20px;background:#d4d4d4;"></div>
<svg style="left:18px;top:819px" width="13" height="16" viewBox="0 0 13 16" ><path d="M1 2a1.500 1.500 0 0 1 1.500-1.500h7.500a1.500 1.500 0 0 1 1.500 1.500v8.500l-3.500 4h-5.500a1.500 1.500 0 0 1-1.500-1.500z" fill="#c4dcf8" stroke="#2f7fd6" stroke-width="1.200"/><path d="M3.300 4h6M3.300 6.500h6M3.300 9h4" stroke="#fff" stroke-width="1.300"/><path d="M8.300 14.300v-3.500h3.500z" fill="#2f7fd6"/></svg>
<div class="t" style="left:37.00px;top:818.50px;height:16px;line-height:16px;font-size:12px;color:#000;letter-spacing:-0.584px;">2021.06.30 16:49:35</div>
<div class="t" style="left:281.00px;top:818.50px;height:16px;line-height:16px;font-size:12px;color:#000;letter-spacing:0.330px;">#ba-t</div>
<div class="t" style="left:365.00px;top:818.50px;height:16px;line-height:16px;font-size:12px;color:#000;letter-spacing:-0.785px;">501284614</div>
<div class="t" style="left:491.00px;top:818.50px;height:16px;line-height:16px;font-size:12px;color:#000;letter-spacing:-0.116px;">buy</div>
<div class="t" style="left:657.33px;top:818.50px;height:16px;line-height:16px;font-size:12px;color:#000;">6</div>
<div class="t" style="left:783.15px;top:818.50px;height:16px;line-height:16px;font-size:12px;color:#000;letter-spacing:-0.309px;">238.49</div>
<div class="t" style="left:937.15px;top:818.50px;height:16px;line-height:16px;font-size:12px;color:#000;letter-spacing:-0.309px;">235.50</div>
<div class="t" style="left:1091.15px;top:818.50px;height:16px;line-height:16px;font-size:12px;color:#000;letter-spacing:-0.309px;">245.00</div>
<div class="t" style="left:1167.00px;top:818.50px;height:16px;line-height:16px;font-size:12px;color:#000;letter-spacing:-0.584px;">2021.07.02 16:37:32</div>
<div class="t" style="left:1385.15px;top:818.50px;height:16px;line-height:16px;font-size:12px;color:#000;letter-spacing:-0.309px;">235.74</div>
<div class="t" style="left:1761.80px;top:818.50px;height:16px;line-height:16px;font-size:12px;color:#ff0000;letter-spacing:-0.138px;">-16.50</div>
<div class="t" style="left:1855.15px;top:818.50px;height:16px;line-height:16px;font-size:12px;color:#ff0000;letter-spacing:-0.215px;">-1.15 %</div>
<div style="left:16px;top:837px;width:1882px;height:19px;background:#ffffff;"></div>
<div style="left:16px;top:856px;width:1882px;height:1px;background:#d4d4d4;"></div>
<div style="left:175px;top:837px;width:1px;height:20px;background:#d4d4d4;"></div>
<div style="left:313px;top:837px;width:1px;height:20px;background:#d4d4d4;"></div>
<div style="left:421px;top:837px;width:1px;height:20px;background:#d4d4d4;"></div>
<div style="left:513px;top:837px;width:1px;height:20px;background:#d4d4d4;"></div>
<div style="left:667px;top:837px;width:1px;height:20px;background:#d4d4d4;"></div>
<div style="left:821px;top:837px;width:1px;height:20px;background:#d4d4d4;"></div>
<div style="left:975px;top:837px;width:1px;height:20px;background:#d4d4d4;"></div>
<div style="left:1129px;top:837px;width:1px;height:20px;background:#d4d4d4;"></div>
<div style="left:1269px;top:837px;width:1px;height:20px;background:#d4d4d4;"></div>
<div style="left:1423px;top:837px;width:1px;height:20px;background:#d4d4d4;"></div>
<div style="left:1798px;top:837px;width:1px;height:20px;background:#d4d4d4;"></div>
<svg style="left:18px;top:839px" width="13" height="16" viewBox="0 0 13 16" ><path d="M1 2a1.500 1.500 0 0 1 1.500-1.500h7.500a1.500 1.500 0 0 1 1.500 1.500v8.500l-3.500 4h-5.500a1.500 1.500 0 0 1-1.500-1.500z" fill="#c4dcf8" stroke="#2f7fd6" stroke-width="1.200"/><path d="M3.300 4h6M3.300 6.500h6M3.300 9h4" stroke="#fff" stroke-width="1.300"/><path d="M8.300 14.300v-3.500h3.500z" fill="#2f7fd6"/></svg>
<div class="t" style="left:37.00px;top:838.50px;height:16px;line-height:16px;font-size:12px;color:#000;letter-spacing:-0.584px;">2021.06.30 16:56:28</div>
<div class="t" style="left:262.00px;top:838.50px;height:16px;line-height:16px;font-size:12px;color:#000;letter-spacing:0.219px;">#nio.us-t</div>
<div class="t" style="left:365.00px;top:838.50px;height:16px;line-height:16px;font-size:12px;color:#000;letter-spacing:-0.785px;">501284633</div>
<div class="t" style="left:491.00px;top:838.50px;height:16px;line-height:16px;font-size:12px;color:#000;letter-spacing:-0.116px;">buy</div>
<div class="t" style="left:651.60px;top:838.50px;height:16px;line-height:16px;font-size:12px;color:#000;letter-spacing:-0.474px;">30</div>
<div class="t" style="left:789.60px;top:838.50px;height:16px;line-height:16px;font-size:12px;color:#000;letter-spacing:-0.326px;">51.92</div>
<div class="t" style="left:943.60px;top:838.50px;height:16px;line-height:16px;font-size:12px;color:#000;letter-spacing:-0.326px;">50.40</div>
<div class="t" style="left:1097.60px;top:838.50px;height:16px;line-height:16px;font-size:12px;color:#000;letter-spacing:-0.326px;">54.00</div>
<div class="t" style="left:1167.00px;top:838.50px;height:16px;line-height:16px;font-size:12px;color:#000;letter-spacing:-0.584px;">2021.06.30 17:17:37</div>
<div class="t" style="left:1391.60px;top:838.50px;height:16px;line-height:16px;font-size:12px;color:#000;letter-spacing:-0.326px;">52.83</div>
<div class="t" style="left:1766.60px;top:838.50px;height:16px;line-height:16px;font-size:12px;color:#0000ff;letter-spacing:-0.326px;">27.30</div>
<div class="t" style="left:1859.95px;top:838.50px;height:16px;line-height:16px;font-size:12px;color:#0000ff;letter-spacing:-0.385px;">1.75 %</div>
<div style="left:16px;top:857px;width:1882px;height:19px;background:#ebebeb;"></div>
<div style="left:16px;top:876px;width:1882px;height:1px;background:#d4d4d4;"></div>
<div style="left:175px;top:857px;width:1px;height:20px;background:#d4d4d4;"></div>
<div style="left:313px;top:857px;width:1px;height:20px;background:#d4d4d4;"></div>
<div style="left:421px;top:857px;width:1px;height:20px;background:#d4d4d4;"></div>
<div style="left:513px;top:857px;width:1px;height:20px;background:#d4d4d4;"></div>
<div style="left:667px;top:857px;width:1px;height:20px;background:#d4d4d4;"></div>
<div style="left:821px;top:857px;width:1px;height:20px;background:#d4d4d4;"></div>
<div style="left:975px;top:857px;width:1px;height:20px;background:#d4d4d4;"></div>
<div style="left:1129px;top:857px;width:1px;height:20px;background:#d4d4d4;"></div>
<div style="left:1269px;top:857px;width:1px;height:20px;background:#d4d4d4;"></div>
<div style="left:1423px;top:857px;width:1px;height:20px;background:#d4d4d4;"></div>
<div style="left:1798px;top:857px;width:1px;height:20px;background:#d4d4d4;"></div>
<svg style="left:18px;top:859px" width="13" height="16" viewBox="0 0 13 16" ><path d="M1 2a1.500 1.500 0 0 1 1.500-1.500h7.500a1.500 1.500 0 0 1 1.500 1.500v8.500l-3.500 4h-5.500a1.500 1.500 0 0 1-1.500-1.500z" fill="#c4dcf8" stroke="#2f7fd6" stroke-width="1.200"/><path d="M3.300 4h6M3.300 6.500h6M3.300 9h4" stroke="#fff" stroke-width="1.300"/><path d="M8.300 14.300v-3.500h3.500z" fill="#2f7fd6"/></svg>
<div class="t" style="left:37.00px;top:858.50px;height:16px;line-height:16px;font-size:12px;color:#000;letter-spacing:-0.584px;">2021.06.30 17:10:34</div>
<div class="t" style="left:281.00px;top:858.50px;height:16px;line-height:16px;font-size:12px;color:#000;letter-spacing:0.330px;">#ge-t</div>
<div class="t" style="left:365.00px;top:858.50px;height:16px;line-height:16px;font-size:12px;color:#000;letter-spacing:-0.785px;">501284688</div>
<div class="t" style="left:491.00px;top:858.50px;height:16px;line-height:16px;font-size:12px;color:#000;letter-spacing:-0.116px;">buy</div>
<div class="t" style="left:645.15px;top:858.50px;height:16px;line-height:16px;font-size:12px;color:#000;letter-spacing:-0.390px;">100</div>
<div class="t" style="left:789.60px;top:858.50px;height:16px;line-height:16px;font-size:12px;color:#000;letter-spacing:-0.326px;">13.23</div>
<div class="t" style="left:943.60px;top:858.50px;height:16px;line-height:16px;font-size:12px;color:#000;letter-spacing:-0.326px;">12.90</div>
<div class="t" style="left:1097.60px;top:858.50px;height:16px;line-height:16px;font-size:12px;color:#000;letter-spacing:-0.326px;">14.20</div>
<div class="t" style="left:1167.00px;top:858.50px;height:16px;line-height:16px;font-size:12px;color:#000;letter-spacing:-0.584px;">2021.07.01 18:02:20</div>
<div class="t" style="left:1391.60px;top:858.50px;height:16px;line-height:16px;font-size:12px;color:#000;letter-spacing:-0.326px;">13.49</div>
<div class="t" style="left:1766.60px;top:858.50px;height:16px;line-height:16px;font-size:12px;color:#0000ff;letter-spacing:-0.326px;">26.00</div>
<div class="t" style="left:1859.95px;top:858.50px;height:16px;line-height:16px;font-size:12px;color:#0000ff;letter-spacing:-0.385px;">1.97 %</div>
<div style="left:16px;top:877px;width:1882px;height:19px;background:#ffffff;"></div>
<div style="left:16px;top:896px;width:1882px;height:1px;background:#d4d4d4;"></div>
<div style="left:822px;top:877px;width:153px;height:19px;background:#fca2a2;"></div>
<div style="left:175px;top:877px;width:1px;height:20px;background:#d4d4d4;"></div>
<div style="left:313px;top:877px;width:1px;height:20px;background:#d4d4d4;"></div>
<div style="left:421px;top:877px;width:1px;height:20px;background:#d4d4d4;"></div>
<div style="left:513px;top:877px;width:1px;height:20px;background:#d4d4d4;"></div>
<div style="left:667px;top:877px;width:1px;height:20px;background:#d4d4d4;"></div>
<div style="left:821px;top:877px;width:1px;height:20px;background:#d4d4d4;"></div>
<div style="left:975px;top:877px;width:1px;height:20px;background:#d4d4d4;"></div>
<div style="left:1129px;top:877px;width:1px;height:20px;background:#d4d4d4;"></div>
<div style="left:1269px;top:877px;width:1px;height:20px;background:#d4d4d4;"></div>
<div style="left:1423px;top:877px;width:1px;height:20px;background:#d4d4d4;"></div>
<div style="left:1798px;top:877px;width:1px;height:20px;background:#d4d4d4;"></div>
<svg style="left:18px;top:879px" width="13" height="16" viewBox="0 0 13 16" ><path d="M1 2a1.500 1.500 0 0 1 1.500-1.500h7.500a1.500 1.500 0 0 1 1.500 1.500v8.500l-3.500 4h-5.500a1.500 1.500 0 0 1-1.500-1.500z" fill="#c4dcf8" stroke="#2f7fd6" stroke-width="1.200"/><path d="M3.300 4h6M3.300 6.500h6M3.300 9h4" stroke="#fff" stroke-width="1.300"/><path d="M8.300 14.300v-3.500h3.500z" fill="#2f7fd6"/></svg>
<div class="t" style="left:37.00px;top:878.50px;height:16px;line-height:16px;font-size:12px;color:#000;letter-spacing:-0.584px;">2021.06.30 17:19:22</div>
<div class="t" style="left:281.00px;top:878.50px;height:16px;line-height:16px;font-size:12px;color:#000;letter-spacing:0.330px;">#ba-t</div>
<div class="t" style="left:365.00px;top:878.50px;height:16px;line-height:16px;font-size:12px;color:#000;letter-spacing:-0.785px;">501284714</div>
<div class="t" style="left:491.00px;top:878.50px;height:16px;line-height:16px;font-size:12px;color:#000;letter-spacing:-0.116px;">buy</div>
<div class="t" style="left:657.33px;top:878.50px;height:16px;line-height:16px;font-size:12px;color:#000;">6</div>
<div class="t" style="left:783.15px;top:878.50px;height:16px;line-height:16px;font-size:12px;color:#000;letter-spacing:-0.309px;">239.66</div>
<div class="t" style="left:937.15px;top:878.50px;height:16px;line-height:16px;font-size:12px;color:#000;letter-spacing:-0.309px;">235.50</div>
<div class="t" style="left:1091.15px;top:878.50px;height:16px;line-height:16px;font-size:12px;color:#000;letter-spacing:-0.309px;">245.00</div>
<div class="t" style="left:1167.00px;top:878.50px;height:16px;line-height:16px;font-size:12px;color:#000;letter-spacing:-0.584px;">2021.07.02 16:37:32</div>
<div class="t" style="left:1385.15px;top:878.50px;height:16px;line-height:16px;font-size:12px;color:#000;letter-spacing:-0.309px;">235.74</div>
<div class="t" style="left:1761.80px;top:878.50px;height:16px;line-height:16px;font-size:12px;color:#ff0000;letter-spacing:-0.138px;">-23.52</div>
<div class="t" style="left:1855.15px;top:878.50px;height:16px;line-height:16px;font-size:12px;color:#ff0000;letter-spacing:-0.215px;">-1.64 %</div>
<div style="left:16px;top:897px;width:1882px;height:19px;background:#ebebeb;"></div>
<div style="left:16px;top:916px;width:1882px;height:1px;background:#d4d4d4;"></div>
<div style="left:175px;top:897px;width:1px;height:20px;background:#d4d4d4;"></div>
<div style="left:313px;top:897px;width:1px;height:20px;background:#d4d4d4;"></div>
<div style="left:421px;top:897px;width:1px;height:20px;background:#d4d4d4;"></div>
<div style="left:513px;top:897px;width:1px;height:20px;background:#d4d4d4;"></div>
<div style="left:667px;top:897px;width:1px;height:20px;background:#d4d4d4;"></div>
<div style="left:821px;top:897px;width:1px;height:20px;background:#d4d4d4;"></div>
<div style="left:975px;top:897px;width:1px;height:20px;background:#d4d4d4;"></div>
<div style="left:1129px;top:897px;width:1px;height:20px;background:#d4d4d4;"></div>
<div style="left:1269px;top:897px;width:1px;height:20px;background:#d4d4d4;"></div>
<div style="left:1423px;top:897px;width:1px;height:20px;background:#d4d4d4;"></div>
<div style="left:1798px;top:897px;width:1px;height:20px;background:#d4d4d4;"></div>
<svg style="left:18px;top:899px" width="13" height="16" viewBox="0 0 13 16" ><path d="M1 2a1.500 1.500 0 0 1 1.500-1.500h7.500a1.500 1.500 0 0 1 1.500 1.500v8.500l-3.500 4h-5.500a1.500 1.500 0 0 1-1.500-1.500z" fill="#c4dcf8" stroke="#2f7fd6" stroke-width="1.200"/><path d="M3.300 4h6M3.300 6.500h6M3.300 9h4" stroke="#fff" stroke-width="1.300"/><path d="M8.300 14.300v-3.500h3.500z" fill="#2f7fd6"/></svg>
<div class="t" style="left:37.00px;top:898.50px;height:16px;line-height:16px;font-size:12px;color:#000;letter-spacing:-0.584px;">2021.07.02 16:39:19</div>
<div class="t" style="left:276.00px;top:898.50px;height:16px;line-height:16px;font-size:12px;color:#000;letter-spacing:0.189px;">#tsla-t</div>
<div class="t" style="left:365.00px;top:898.50px;height:16px;line-height:16px;font-size:12px;color:#000;letter-spacing:-0.785px;">501288564</div>
<div class="t" style="left:491.00px;top:898.50px;height:16px;line-height:16px;font-size:12px;color:#000;letter-spacing:-0.116px;">buy</div>
<div class="t" style="left:657.33px;top:898.50px;height:16px;line-height:16px;font-size:12px;color:#000;">4</div>
<div class="t" style="left:783.15px;top:898.50px;height:16px;line-height:16px;font-size:12px;color:#000;letter-spacing:-0.309px;">696.89</div>
<div class="t" style="left:1167.00px;top:898.50px;height:16px;line-height:16px;font-size:12px;color:#000;letter-spacing:-0.584px;">2021.07.02 17:00:49</div>
<div class="t" style="left:1385.15px;top:898.50px;height:16px;line-height:16px;font-size:12px;color:#000;letter-spacing:-0.309px;">686.79</div>
<div class="t" style="left:1761.80px;top:898.50px;height:16px;line-height:16px;font-size:12px;color:#ff0000;letter-spacing:-0.138px;">-40.40</div>
<div class="t" style="left:1855.15px;top:898.50px;height:16px;line-height:16px;font-size:12px;color:#ff0000;letter-spacing:-0.215px;">-1.45 %</div>
<div style="left:15px;top:917px;width:1883px;height:19px;background:#ffffff;"></div>
<div style="left:15px;top:936px;width:1883px;height:1px;background:#d4d4d4;"></div>
<div style="left:175px;top:917px;width:1px;height:20px;background:#d4d4d4;"></div>
<div style="left:313px;top:917px;width:1px;height:20px;background:#d4d4d4;"></div>
<div style="left:421px;top:917px;width:1px;height:20px;background:#d4d4d4;"></div>
<div style="left:513px;top:917px;width:1px;height:20px;background:#d4d4d4;"></div>
<div style="left:1423px;top:917px;width:1px;height:20px;background:#d4d4d4;"></div>
<svg style="left:18px;top:921px" width="12" height="12" viewBox="0 0 12 12" ><circle cx="6" cy="6" r="5" fill="#fff" stroke="#222" stroke-width="1.200"/><path d="M3.500 6h5" stroke="#222" stroke-width="1.200"/><path d="M6 3.500v5" stroke="#222" stroke-width="1.200"/></svg>
<div class="t" style="left:37.00px;top:918.50px;height:16px;line-height:16px;font-size:12px;color:#000;letter-spacing:-0.584px;">2021.07.03 05:00:08</div>
<div class="t" style="left:365.00px;top:918.50px;height:16px;line-height:16px;font-size:12px;color:#000;letter-spacing:-0.785px;">501207744</div>
<div class="t" style="left:469.00px;top:918.50px;height:16px;line-height:16px;font-size:12px;color:#000;letter-spacing:-0.148px;">balance</div>
<div class="t" style="left:517.00px;top:918.50px;height:16px;line-height:16px;font-size:12px;color:#000;letter-spacing:0.078px;">None</div>
<div class="t" style="left:1773.05px;top:918.50px;height:16px;line-height:16px;font-size:12px;color:#000;letter-spacing:-0.351px;">0.08</div>
<div style="left:15px;top:937px;width:1883px;height:19px;background:#ebebeb;"></div>
<div style="left:15px;top:956px;width:1883px;height:1px;background:#d4d4d4;"></div>
<div style="left:175px;top:937px;width:1px;height:20px;background:#d4d4d4;"></div>
<div style="left:313px;top:937px;width:1px;height:20px;background:#d4d4d4;"></div>
<div style="left:421px;top:937px;width:1px;height:20px;background:#d4d4d4;"></div>
<div style="left:513px;top:937px;width:1px;height:20px;background:#d4d4d4;"></div>
<div style="left:1423px;top:937px;width:1px;height:20px;background:#d4d4d4;"></div>
<svg style="left:18px;top:941px" width="12" height="12" viewBox="0 0 12 12" ><circle cx="6" cy="6" r="5" fill="#fff" stroke="#222" stroke-width="1.200"/><path d="M3.500 6h5" stroke="#222" stroke-width="1.200"/></svg>
<div class="t" style="left:37.00px;top:938.50px;height:16px;line-height:16px;font-size:12px;color:#000;letter-spacing:-0.584px;">2021.07.03 05:00:08</div>
<div class="t" style="left:365.00px;top:938.50px;height:16px;line-height:16px;font-size:12px;color:#000;letter-spacing:-0.785px;">501207751</div>
<div class="t" style="left:481.00px;top:938.50px;height:16px;line-height:16px;font-size:12px;color:#000;letter-spacing:-0.057px;">credit</div>
<div class="t" style="left:517.00px;top:938.50px;height:16px;line-height:16px;font-size:12px;color:#000;letter-spacing:-0.420px;">Bonus: -0.08 USD</div>
<div class="t" style="left:1768.25px;top:938.50px;height:16px;line-height:16px;font-size:12px;color:#000;letter-spacing:-0.120px;">-0.08</div>
<div style="left:15px;top:957px;width:1883px;height:20px;background:#c8c8c8;"></div>
<svg style="left:18px;top:961px" width="12" height="12" viewBox="0 0 12 12" ><circle cx="6" cy="6" r="5" fill="#fff" stroke="#222" stroke-width="1.200"/><path d="M3.500 6h5M6 3.500v5" stroke="#222" stroke-width="1.200"/></svg>
<div class="t" style="left:37.00px;top:958.50px;height:16px;line-height:16px;font-size:12px;color:#000;letter-spacing:-0.085px;font-weight:bold;">Profit: 400.45  Credit: 1 000.29  Deposit: 1 004.85  Withdrawal: 0.00  Balance: 2 405.59</div>
<div class="t" style="left:1757.00px;top:958.50px;height:16px;line-height:16px;font-size:12px;color:#000;letter-spacing:0.216px;font-weight:bold;">413.74</div>
<div style="left:1898px;top:733px;width:17px;height:258px;background:#f0f0f0;"></div>
<svg style="left:1902px;top:740px" width="10" height="6" viewBox="0 0 10 6" ><path d="M1 5l4-4 4 4" fill="none" stroke="#444" stroke-width="1.400"/></svg>
<svg style="left:1902px;top:979px" width="10" height="6" viewBox="0 0 10 6" ><path d="M1 1l4 4 4-4" fill="none" stroke="#444" stroke-width="1.400"/></svg>
<div style="left:1899px;top:911px;width:15px;height:62px;background:#cdcdcd;"></div>
<div style="left:1915px;top:732px;width:1px;height:259px;background:#dcdcdc;"></div>
<div class="t" style="left:1599.00px;top:944.00px;height:26px;line-height:26px;font-size:21px;color:rgba(120,120,120,.55);letter-spacing:-0.483px;">Activate Windows</div>
<div class="t" style="left:1599.00px;top:971.00px;height:20px;line-height:20px;font-size:15px;color:rgba(120,120,120,.55);letter-spacing:-0.022px;">Go to Settings to activate Windows.</div>
<div style="left:14px;top:991px;width:1902px;height:1px;background:#000;"></div>
<div style="left:135px;top:991px;width:58px;height:20px;background:#fff;border:1px solid #000;border-top:none;box-shadow:1px 1px 0 #808080"></div>
<div class="t" style="left:28.00px;top:993.00px;height:16px;line-height:16px;font-size:12px;color:#707070;letter-spacing:-0.380px;">Trade</div>
<div class="t" style="left:77.00px;top:993.00px;height:16px;line-height:16px;font-size:12px;color:#707070;letter-spacing:-0.337px;">Exposure</div>
<div class="t" style="left:145.00px;top:992.50px;height:16px;line-height:16px;font-size:12px;color:#000;letter-spacing:0.095px;">History</div>
<div class="t" style="left:203.00px;top:993.00px;height:16px;line-height:16px;font-size:12px;color:#707070;letter-spacing:-0.251px;">News</div>
<div class="t" style="left:264.00px;top:993.00px;height:16px;line-height:16px;font-size:12px;color:#707070;letter-spacing:0.093px;">Mailbox</div>
<div class="t" style="left:334.00px;top:993.00px;height:16px;line-height:16px;font-size:12px;color:#707070;letter-spacing:-0.212px;">Calendar</div>
<div class="t" style="left:401.00px;top:993.00px;height:16px;line-height:16px;font-size:12px;color:#707070;letter-spacing:0.092px;">Company</div>
<div class="t" style="left:473.00px;top:993.00px;height:16px;line-height:16px;font-size:12px;color:#707070;letter-spacing:-0.112px;">Alerts</div>
<div class="t" style="left:523.00px;top:993.00px;height:16px;line-height:16px;font-size:12px;color:#707070;letter-spacing:-0.042px;">Articles</div>
<div class="t" style="left:589.00px;top:993.00px;height:16px;line-height:16px;font-size:12px;color:#707070;letter-spacing:-0.486px;">Code Base</div>
<div class="t" style="left:664.00px;top:993.00px;height:16px;line-height:16px;font-size:12px;color:#707070;letter-spacing:-0.383px;">Experts</div>
<div class="t" style="left:722.00px;top:993.00px;height:16px;line-height:16px;font-size:12px;color:#707070;letter-spacing:-0.194px;">Journal</div>
<div style="left:67px;top:994px;width:1px;height:14px;background:#707070;"></div>
<div style="left:254px;top:994px;width:1px;height:14px;background:#707070;"></div>
<div style="left:323px;top:994px;width:1px;height:14px;background:#707070;"></div>
<div style="left:391px;top:994px;width:1px;height:14px;background:#707070;"></div>
<div style="left:463px;top:994px;width:1px;height:14px;background:#707070;"></div>
<div style="left:513px;top:994px;width:1px;height:14px;background:#707070;"></div>
<div style="left:579px;top:994px;width:1px;height:14px;background:#707070;"></div>
<div style="left:654px;top:994px;width:1px;height:14px;background:#707070;"></div>
<div style="left:712px;top:994px;width:1px;height:14px;background:#707070;"></div>
<div class="t" style="left:233.00px;top:1000.00px;height:10px;line-height:10px;font-size:9px;color:#ff0000;letter-spacing:0.494px;font-weight:bold;">99</div>
<div class="t" style="left:308.00px;top:1000.00px;height:10px;line-height:10px;font-size:9px;color:#ff0000;font-weight:bold;">7</div>
<div class="t" style="left:564.00px;top:1000.00px;height:10px;line-height:10px;font-size:9px;color:#ff0000;font-weight:bold;">1</div>
<svg style="left:1624px;top:995px" width="13" height="16" viewBox="0 0 13 16" ><path d="M4 6V3.500a2.500 2.500 0 0 1 5 0V6" fill="none" stroke="#8a8f98" stroke-width="1.100"/><rect x="0.500" y="5" width="12" height="11" fill="#f5c518"/><path d="M3 14v-2.500h1.500l1-1.500 1 1.500 1-1.500 1 1.500h1.500v2.500z" fill="#1e63c4"/></svg>
<div class="t" style="left:1641.00px;top:995.50px;height:16px;line-height:16px;font-size:12px;color:#000;letter-spacing:0.054px;">Market</div>
<svg style="left:1692px;top:996px" width="16" height="16" viewBox="0 0 16 16" ><path d="M6.500 6a3.500 3.500 0 1 1 6 3" fill="none" stroke="#2f86e0" stroke-width="1.100"/><path d="M4.500 4.500a6 6 0 1 1 10 6" fill="none" stroke="#2f86e0" stroke-width="1.100"/><path d="M2.500 7v9M7 4v12" stroke="#14a314"/><rect x="1" y="9" width="3.500" height="4.500" fill="#17b217"/><rect x="5.500" y="6" width="3.500" height="7" fill="#17b217"/></svg>
<div class="t" style="left:1710.00px;top:995.50px;height:16px;line-height:16px;font-size:12px;color:#000;letter-spacing:-0.337px;">Signals</div>
<svg style="left:1761px;top:996px" width="16" height="16" viewBox="0 0 16 16" ><path d="M3.500 9a3 3 0 0 1 .5-6 4 4 0 0 1 7.500-.5 3.200 3.200 0 0 1 1 6.500z" fill="#e4f1fd" stroke="#2f86e0" stroke-width="1"/><rect x="3" y="6" width="10" height="3.500" fill="#454b54"/><rect x="3" y="10.500" width="10" height="3.500" fill="#454b54"/><path d="M8 14v2M5.500 16h5" stroke="#454b54"/></svg>
<div class="t" style="left:1779.00px;top:995.50px;height:16px;line-height:16px;font-size:12px;color:#000;letter-spacing:-1.004px;">VPS</div>
<svg style="left:1812px;top:996px" width="18" height="15" viewBox="0 0 18 15" ><rect x="0.600" y="0.600" width="15.800" height="13.800" fill="#fff" stroke="#1b66d0" stroke-width="1.200"/><rect x="1" y="1" width="15" height="2" fill="#3a7fe0"/><rect x="1.500" y="3" width="14" height="7.500" fill="#2f7d32"/><path d="M2.500 8.500l3.500-3 3 1.500 5.500-3" stroke="#a8f090" fill="none" stroke-width="1.300"/></svg>
<div class="t" style="left:1831.00px;top:995.50px;height:16px;line-height:16px;font-size:12px;color:#000;letter-spacing:-0.299px;">Strategy Tester</div>
<div style="left:0px;top:1016px;width:1920px;height:1px;background:#dcdcdc;"></div>
<div class="t" style="left:2.00px;top:1022.00px;height:16px;line-height:16px;font-size:12px;color:#000;letter-spacing:-0.354px;">For Help, press F1</div>
<div style="left:1227px;top:1021px;width:1px;height:18px;background:#b4b4b4;"></div>
<div style="left:1355px;top:1021px;width:1px;height:18px;background:#b4b4b4;"></div>
<div style="left:1453px;top:1021px;width:1px;height:18px;background:#b4b4b4;"></div>
<div style="left:1524px;top:1021px;width:1px;height:18px;background:#b4b4b4;"></div>
<div style="left:1595px;top:1021px;width:1px;height:18px;background:#b4b4b4;"></div>
<div style="left:1663px;top:1021px;width:1px;height:18px;background:#b4b4b4;"></div>
<div style="left:1733px;top:1021px;width:1px;height:18px;background:#b4b4b4;"></div>
<div style="left:1799px;top:1021px;width:1px;height:18px;background:#b4b4b4;"></div>
<div class="t" style="left:1233.00px;top:1022.00px;height:16px;line-height:16px;font-size:12px;color:#000;letter-spacing:0.139px;">default</div>
<div class="t" style="left:1361.00px;top:1022.00px;height:16px;line-height:16px;font-size:12px;color:#000;letter-spacing:-0.589px;">2021.03.22 00:00</div>
<div class="t" style="left:1459.00px;top:1022.00px;height:16px;line-height:16px;font-size:12px;color:#000;letter-spacing:-0.504px;">O: 71.30</div>
<div class="t" style="left:1530.00px;top:1022.00px;height:16px;line-height:16px;font-size:12px;color:#000;letter-spacing:-0.295px;">H: 72.42</div>
<div class="t" style="left:1601.00px;top:1022.00px;height:16px;line-height:16px;font-size:12px;color:#000;letter-spacing:-0.546px;">L: 71.04</div>
<div class="t" style="left:1669.00px;top:1022.00px;height:16px;line-height:16px;font-size:12px;color:#000;letter-spacing:-0.545px;">C: 71.69</div>
<svg style="left:1805px;top:1022px" width="16" height="16" viewBox="0 0 16 16" ><rect x="0.500" y="0.500" width="9" height="13" fill="#4aa3ea" stroke="#1b6fc0"/><path d="M2 3h6M2 5.500h6" stroke="#d6ecff"/><circle cx="11" cy="11.500" r="4" fill="#3cb531" stroke="#fff" stroke-width=".8"/><path d="M9 11.500l1.500 1.500 2.500-3" stroke="#fff" fill="none" stroke-width="1.200"/></svg>
<div class="t" style="left:1825.00px;top:1022.00px;height:16px;line-height:16px;font-size:12px;color:#000;letter-spacing:-0.271px;">260 / 4 Kb</div>
<div style="left:0px;top:1040px;width:1920px;height:40px;background:linear-gradient(to right,#25383f 0%,#243640 30%,#1f2d40 60%,#1a2340 100%);"></div>
<div style="left:489px;top:1040px;width:48px;height:40px;background:rgba(255,255,255,.18);"></div>
<div style="left:199px;top:1078px;width:40px;height:2px;background:#76b9ed;"></div>
<div style="left:489px;top:1078px;width:48px;height:2px;background:#76b9ed;"></div>
<svg style="left:16px;top:1052px" width="16" height="16" viewBox="0 0 16 16" ><path d="M0 2.300l6.500-.900v6.200h-6.500zM7.300 1.300l8.700-1.300v7.600h-8.700zM0 8.400h6.500v6.200l-6.500-.900zM7.300 8.400h8.700v7.600l-8.700-1.300z" fill="#fff"/></svg>
<svg style="left:63px;top:1051px" width="18" height="18" viewBox="0 0 18 18" ><circle cx="10.500" cy="7" r="5.500" fill="none" stroke="#fff" stroke-width="1.500"/><path d="M6.500 11l-5.500 6" stroke="#fff" stroke-width="1.600"/></svg>
<svg style="left:111px;top:1051px" width="18" height="18" viewBox="0 0 18 18" ><circle cx="9" cy="9" r="6.500" fill="none" stroke="#fff" stroke-width="2"/></svg>
<svg style="left:159px;top:1051px" width="18" height="18" viewBox="0 0 18 18" ><rect x="1.500" y="5.500" width="10" height="7" fill="none" stroke="#fff" stroke-width="1.300"/><path d="M1 2.500h11M1 15.500h11" stroke="#fff" stroke-width="1.300"/><path d="M15 1.500v3.500M15 9.500v6.500" stroke="#fff" stroke-width="1.300"/><rect x="14" y="6.300" width="2" height="2" fill="#fff"/></svg>
<svg style="left:207px;top:1048px" width="24" height="24" viewBox="0 0 24 24" ><circle cx="12" cy="12" r="11" fill="#fbc116"/><path d="M12 12L2.500 6.500A11 11 0 0 1 21.500 6.500z" fill="#e33b2e"/><path d="M12 12L2.500 6.500A11 11 0 0 0 12 23z" fill="#2da94f"/><circle cx="12" cy="12" r="5" fill="#fff"/><circle cx="12" cy="12" r="4" fill="#4285f4"/></svg>
<svg style="left:256px;top:1049px" width="24" height="22" viewBox="0 0 24 22" ><path d="M1 3h8l2 2h12v4H1z" fill="#e8a92a"/><rect x="1" y="7" width="22" height="14" fill="#fbd65a"/><rect x="7" y="14" width="10" height="7" fill="#3d8fe0"/><rect x="9.500" y="17" width="5" height="4" fill="#fbd65a"/></svg>
<svg style="left:305px;top:1048px" width="24" height="24" viewBox="0 0 24 24" ><circle cx="12" cy="12" r="10" fill="#0a1a3a" stroke="#1e9df0" stroke-width="2"/><path d="M16 8a6 6 0 1 0 0 8" fill="none" stroke="#fff" stroke-width="2.400"/><circle cx="18" cy="5" r="4" fill="#e8413a"/></svg>
<svg style="left:355px;top:1047px" width="22" height="22" viewBox="0 0 22 22" ><rect x="1" y="1" width="20" height="20" fill="#1c2a6b" stroke="#8ea0ff" stroke-width="1.400"/><text x="11" y="15.500" font-size="11" font-weight="bold" text-anchor="middle" fill="#9fb0ff" font-family="Liberation Sans">Ps</text></svg>
<svg style="left:403px;top:1049px" width="24" height="20" viewBox="0 0 24 20" ><path d="M12 0l12 9-12 9L0 9z" fill="#2c8a3a"/><path d="M12 0l12 9H0z" fill="#d8452e"/><path d="M12 2l8 6-8 7-8-7z" fill="#e7c33a"/><path d="M12 6l5 3-5 4-5-4z" fill="#3aa0e0"/><path d="M0 9l12 9 12-9-12 11z" fill="#eee"/></svg>
<svg style="left:452px;top:1048px" width="24" height="24" viewBox="0 0 24 24" ><circle cx="12" cy="12" r="11" fill="#1e8fd8"/><path d="M3 15c0-7 6-11 12-9 4 1.500 6 5 5 8h-9c0 3 3 5 7 4-3 4-12 4-15-3z" fill="#4fd1a8"/><path d="M11 14c0-3 2-5 5-5 3 0 5 2 4 5z" fill="#123e7a" opacity=".55"/></svg>
<svg style="left:501px;top:1048px" width="26" height="24" viewBox="0 0 26 24" ><circle cx="8" cy="16" r="6.500" fill="#e01b24"/><circle cx="18" cy="7.500" r="6" fill="#1a73f0"/></svg>
<svg style="left:1511px;top:1049px" width="24" height="22" viewBox="0 0 24 22" ><circle cx="9" cy="10" r="8" fill="#f7b32b"/><path d="M9 17a4 4 0 0 1 1-7.500 5 5 0 0 1 9 1.500 3 3 0 0 1 0 6z" fill="#e8eef5"/></svg>
<div class="t" style="left:1542.00px;top:1053.00px;height:16px;line-height:16px;font-size:13px;color:#f0f0f0;letter-spacing:-0.650px;">88°F</div>
<div class="t" style="left:1578.00px;top:1053.00px;height:16px;line-height:16px;font-size:13px;color:#f0f0f0;letter-spacing:0.345px;">Mostly sunny</div>
<svg style="left:1676px;top:1055px" width="14" height="9" viewBox="0 0 14 9" ><path d="M1 8l6-6 6 6" fill="none" stroke="#fff" stroke-width="1.300"/></svg>
<svg style="left:1700px;top:1052px" width="16" height="16" viewBox="0 0 16 16" ><rect x="2.500" y="3.500" width="8" height="9" rx="2" fill="none" stroke="#fff" stroke-width="1.100"/><path d="M10.500 6.500l3-1.500v6l-3-1.500M5 1.500h3M5 14.500h3" stroke="#fff" fill="none" stroke-width="1.100"/></svg>
<svg style="left:1722px;top:1052px" width="18" height="16" viewBox="0 0 18 16" ><rect x="4.500" y="2.500" width="12" height="8" fill="none" stroke="#fff" stroke-width="1.100"/><path d="M10 10.500v3M6 14.500h8M1 1v6h3" stroke="#fff" fill="none" stroke-width="1.100"/></svg>
<svg style="left:1746px;top:1052px" width="18" height="16" viewBox="0 0 18 16" ><path d="M1 6h3l4-4v12l-4-4H1z" fill="none" stroke="#fff" stroke-width="1.100"/><path d="M10.500 5.500a4 4 0 0 1 0 5M12.500 3.500a7 7 0 0 1 0 9" fill="none" stroke="#fff" stroke-width="1"/><path d="M14.500 2a9 9 0 0 1 0 12" fill="none" stroke="#999" stroke-width="1"/></svg>
<div class="t" style="left:1773.00px;top:1052.00px;height:16px;line-height:16px;font-size:12px;color:#fff;letter-spacing:-0.668px;">ENG</div>
<div class="t" style="left:1811.00px;top:1043.00px;height:16px;line-height:16px;font-size:12px;color:#fff;letter-spacing:-0.420px;">03:52 PM</div>
<div class="t" style="left:1812.50px;top:1060.50px;height:16px;line-height:16px;font-size:12px;color:#fff;letter-spacing:-0.214px;">7/3/2021</div>
<svg style="left:1878px;top:1050px" width="26" height="28" viewBox="0 0 26 28" ><path d="M1 1h15v11h-9l-3 3v-3h-3z" fill="#fff"/><path d="M3.500 4h10M3.500 6.500h10M3.500 9h7" stroke="#1f2d40" stroke-width="1"/><circle cx="16" cy="17" r="7.500" fill="#2b303b" stroke="#b8b8b8" stroke-width="1"/><path d="M14 15.300l2.500-1.800v8" fill="none" stroke="#fff" stroke-width="1.300"/></svg>
<div style="left:1915px;top:1040px;width:1px;height:40px;background:#5f6675;"></div>
</div></body></html>
